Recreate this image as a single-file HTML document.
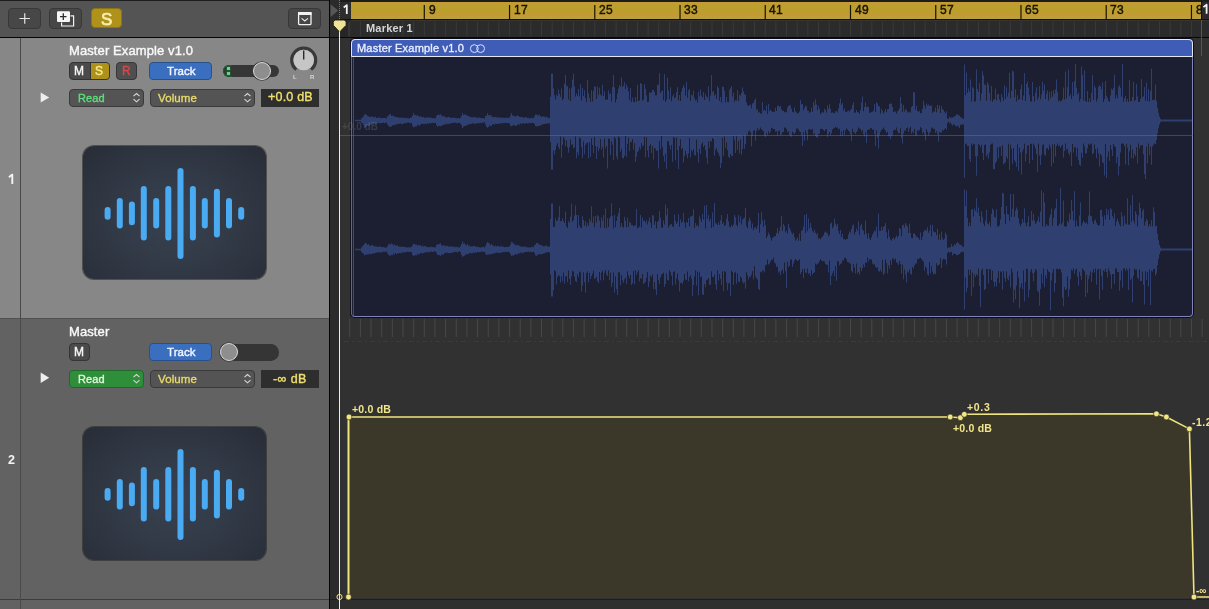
<!DOCTYPE html>
<html><head><meta charset="utf-8">
<style>
*{margin:0;padding:0;box-sizing:border-box}
html,body{width:1209px;height:609px;overflow:hidden;background:#2f2f2f;font-family:"Liberation Sans",sans-serif;position:relative}
.a{position:absolute}
.t{position:absolute;white-space:nowrap;line-height:1;will-change:transform}
svg{position:absolute;left:0;top:0}
</style></head><body>
<div class="a" style="left:0px;top:0px;width:329px;height:38px;background:#545454;border-top:1px solid #1c1c1c"></div>
<div class="a" style="left:0px;top:37px;width:329px;height:1px;background:#060606;"></div>
<div class="a" style="left:0px;top:38px;width:329px;height:280px;background:#878787;"></div>
<div class="a" style="left:0px;top:318px;width:329px;height:1px;background:#505050;"></div>
<div class="a" style="left:0px;top:319px;width:329px;height:280px;background:#626262;"></div>
<div class="a" style="left:0px;top:599px;width:329px;height:1px;background:#3c3c3c;"></div>
<div class="a" style="left:0px;top:600px;width:329px;height:9px;background:#626262;"></div>
<div class="a" style="left:20px;top:38px;width:1px;height:571px;background:#4a4a4a;"></div>
<div class="a" style="left:8px;top:8px;width:33px;height:21px;background:#474747;border:1px solid #383838;border-radius:4px;"></div>
<div class="a" style="left:49px;top:8px;width:33px;height:21px;background:#474747;border:1px solid #383838;border-radius:4px;"></div>
<div class="a" style="left:91px;top:8px;width:31px;height:20px;background:#b0921a;border:1px solid #8c7514;border-radius:4px;"></div>
<div class="a" style="left:288px;top:8px;width:33px;height:21px;background:#474747;border:1px solid #383838;border-radius:4px;"></div>
<svg width="329" height="38">
<path d="M19.5 18.5H30M24.75 13.2V23.8" stroke="#e6e6e6" stroke-width="1.2"/>
<path d="M61.6 22.5V26H73.6V15.8H70.5" fill="none" stroke="#f2f2f2" stroke-width="1.2"/>
<rect x="57" y="11.2" width="13" height="10.8" rx="1" fill="#f6f6f6"/>
<path d="M60 16.6H66.5M63.3 13.3V19.9" stroke="#2a2a2a" stroke-width="1.3"/>
<rect x="298.6" y="12.6" width="12.4" height="12" rx="0.8" fill="none" stroke="#f2f2f2" stroke-width="1.3"/>
<rect x="298" y="12" width="13.6" height="3" fill="#f2f2f2"/>
<path d="M301.6 18.4L304.8 21L308 18.4" fill="none" stroke="#f0f0f0" stroke-width="1.1"/>
</svg>
<div class="t" style="left:100.6px;top:11.21px;font-size:17px;color:#f8efb0;font-weight:normal;-webkit-text-stroke:0.65px #f8efb0">S</div>
<svg width="30" height="200"><path d="M12.3 184V174.6L8.9 177.2" fill="none" stroke="#f4f4f4" stroke-width="1.9" stroke-linejoin="round"/></svg>
<div class="t" style="left:8px;top:454.42px;font-size:12.5px;color:#f4f4f4;font-weight:bold;">2</div>
<div class="t" style="left:69px;top:44.20px;font-size:13px;color:#f8f8f8;font-weight:normal;letter-spacing:0.1px;-webkit-text-stroke:0.40px #f8f8f8">Master Example v1.0</div>
<div class="a" style="left:69px;top:62px;width:41px;height:18px;border-radius:4px;overflow:hidden;border:1px solid #333;background:#4a4a4a"><div class="a" style="left:20px;top:0;width:20px;height:16px;background:#ad9118;border-left:1px solid #333"></div></div>
<div class="t" style="left:74.3px;top:65.24px;font-size:12px;color:#f6f6f6;font-weight:normal;-webkit-text-stroke:0.40px #f6f6f6">M</div>
<div class="t" style="left:95.3px;top:65.24px;font-size:12px;color:#f6ea90;font-weight:normal;-webkit-text-stroke:0.40px #f6ea90">S</div>
<div class="a" style="left:116px;top:62px;width:21px;height:18px;background:#4f4f4f;border:1px solid #363636;border-radius:4px;"></div>
<div class="t" style="left:121.8px;top:65.24px;font-size:12px;color:#d84848;font-weight:normal;-webkit-text-stroke:0.35px #d84848">R</div>
<div class="a" style="left:223px;top:65px;width:56px;height:12px;border-radius:6px;background:#363636"></div>
<div class="a" style="left:223px;top:65px;width:9px;height:12px;border-radius:6px 0 0 6px;border:1px solid #1f5a2c;border-right:none"></div>
<div class="a" style="left:227px;top:67px;width:3px;height:3px;background:#6ad28e;box-shadow:0 0 0 0.6px #1d6a34"></div>
<div class="a" style="left:227px;top:72px;width:3px;height:3px;background:#6ad28e;box-shadow:0 0 0 0.6px #1d6a34"></div>
<div class="a" style="left:252.6px;top:61.5px;width:18.4px;height:18.4px;border-radius:50%;background:#8e8e8e;border:1.4px solid #dadada;box-shadow:0 0 0 0.8px #3a3a3a"></div>
<svg width="329" height="90" style="top:0px">
<path d="M296.4 69.6A12 12 0 1 1 311 69.6" fill="none" stroke="#383838" stroke-width="3.2"/>
<circle cx="303.7" cy="60" r="10.3" fill="#c6c6c6"/>
<path d="M303.7 50.6V59.6" stroke="#2a2a2a" stroke-width="1.4"/>
</svg>
<div class="t" style="left:292.6px;top:74.42px;font-size:6px;color:#d6d6d6;font-weight:bold;">L</div>
<div class="t" style="left:310.4px;top:74.42px;font-size:6px;color:#d6d6d6;font-weight:bold;">R</div>
<div class="a" style="left:149px;top:62px;width:63px;height:17.6px;background:#3a6fbf;border:1px solid #28508c;border-radius:4px;"></div>
<div class="t" style="left:166.8px;top:65.67px;font-size:11.5px;color:#f0f4ff;font-weight:normal;letter-spacing:0.05px;-webkit-text-stroke:0.40px #f0f4ff">Track</div>
<svg width="60" height="20" style="top:89px"><path d="M40.7 3.5L49.2 8.5L40.7 13.6Z" fill="#eeeeee"/></svg>
<div class="a" style="left:69px;top:89px;width:75px;height:17.5px;background:#545454;border:1px solid #3a3a3a;border-radius:4px;"></div>
<div class="t" style="left:77.6px;top:93.19px;font-size:11px;color:#5ee07c;font-weight:normal;letter-spacing:0.1px;-webkit-text-stroke:0.35px #5ee07c">Read</div>
<div class="a" style="left:150px;top:89px;width:105px;height:17.5px;background:#545454;border:1px solid #3a3a3a;border-radius:4px;"></div>
<div class="t" style="left:158.4px;top:92.77px;font-size:11.5px;color:#e8da6a;font-weight:normal;letter-spacing:0.1px;-webkit-text-stroke:0.35px #e8da6a">Volume</div>
<svg width="329" height="20" style="top:89px"><path d="M133.5 7.2L136.5 4.6L139.5 7.2M133.5 10.2L136.5 12.8L139.5 10.2" fill="none" stroke="#d8d8d8" stroke-width="1.1"/></svg>
<svg width="329" height="20" style="top:89px"><path d="M244.5 7.2L247.5 4.6L250.5 7.2M244.5 10.2L247.5 12.8L250.5 10.2" fill="none" stroke="#d8d8d8" stroke-width="1.1"/></svg>
<div class="a" style="left:261px;top:89px;width:58px;height:18px;background:#2e2e2e;"></div>
<div class="t" style="left:267.5px;top:91.22px;font-size:12.5px;color:#f0e070;font-weight:normal;letter-spacing:0.2px;-webkit-text-stroke:0.35px #f0e070">+0.0 dB</div>
<div class="t" style="left:69px;top:325.20px;font-size:13px;color:#f8f8f8;font-weight:normal;letter-spacing:0.1px;-webkit-text-stroke:0.40px #f8f8f8">Master</div>
<div class="a" style="left:69px;top:343px;width:21px;height:18px;background:#4a4a4a;border:1px solid #353535;border-radius:4px;"></div>
<div class="t" style="left:74.3px;top:346.44px;font-size:12px;color:#f6f6f6;font-weight:normal;-webkit-text-stroke:0.40px #f6f6f6">M</div>
<div class="a" style="left:220px;top:344px;width:59px;height:16.5px;border-radius:8.25px;background:#353535"></div>
<div class="a" style="left:219.6px;top:342.8px;width:18.4px;height:18.4px;border-radius:50%;background:#8e8e8e;border:1.4px solid #dadada;box-shadow:0 0 0 0.8px #3a3a3a"></div>
<div class="a" style="left:149px;top:343.3px;width:63px;height:17.6px;background:#3a6fbf;border:1px solid #28508c;border-radius:4px;"></div>
<div class="t" style="left:166.8px;top:346.97px;font-size:11.5px;color:#f0f4ff;font-weight:normal;letter-spacing:0.05px;-webkit-text-stroke:0.40px #f0f4ff">Track</div>
<svg width="60" height="20" style="top:370px"><path d="M40.7 2.5L49.2 7.8L40.7 13Z" fill="#eeeeee"/></svg>
<div class="a" style="left:69px;top:370px;width:75px;height:17.5px;background:#2e8e3a;border:1px solid #1f6a2a;border-radius:4px;"></div>
<div class="t" style="left:77.6px;top:374.19px;font-size:11px;color:#e2f6dc;font-weight:normal;letter-spacing:0.1px;-webkit-text-stroke:0.35px #e2f6dc">Read</div>
<div class="a" style="left:150px;top:370px;width:105px;height:17.5px;background:#545454;border:1px solid #3a3a3a;border-radius:4px;"></div>
<div class="t" style="left:158.4px;top:373.77px;font-size:11.5px;color:#e8da6a;font-weight:normal;letter-spacing:0.1px;-webkit-text-stroke:0.35px #e8da6a">Volume</div>
<svg width="329" height="20" style="top:370px"><path d="M133.5 7.2L136.5 4.6L139.5 7.2M133.5 10.2L136.5 12.8L139.5 10.2" fill="none" stroke="#d8d8d8" stroke-width="1.1"/></svg>
<svg width="329" height="20" style="top:370px"><path d="M244.5 7.2L247.5 4.6L250.5 7.2M244.5 10.2L247.5 12.8L250.5 10.2" fill="none" stroke="#d8d8d8" stroke-width="1.1"/></svg>
<div class="a" style="left:261px;top:370px;width:58px;height:18px;background:#2e2e2e;"></div>
<div class="t" style="left:272.5px;top:372.62px;font-size:12.5px;color:#f0e070;font-weight:normal;letter-spacing:0.4px;-webkit-text-stroke:0.35px #f0e070">-∞ dB</div>
<div class="a" style="left:83px;top:146px;width:183px;height:133px;border-radius:11px;background:radial-gradient(ellipse at 50% 55%,#384150 0%,#333b48 40%,#2c323d 80%,#272c36 100%);box-shadow:0 0 0 1px rgba(35,35,35,0.55)"></div>
<svg width="329" height="300" style="top:0px"><rect x="104.6" y="207.1" width="6" height="12.7" rx="3" fill="#4aaaf2"/><rect x="116.8" y="197.9" width="6" height="30.7" rx="3" fill="#4aaaf2"/><rect x="128.9" y="201.4" width="6" height="23.8" rx="3" fill="#4aaaf2"/><rect x="140.8" y="186.0" width="6" height="54.5" rx="3" fill="#4aaaf2"/><rect x="153.2" y="197.9" width="6" height="30.7" rx="3" fill="#4aaaf2"/><rect x="165.3" y="186.0" width="6" height="54.5" rx="3" fill="#4aaaf2"/><rect x="177.5" y="167.9" width="6" height="91.1" rx="3" fill="#4aaaf2"/><rect x="189.9" y="186.0" width="6" height="54.5" rx="3" fill="#4aaaf2"/><rect x="201.8" y="197.9" width="6" height="30.7" rx="3" fill="#4aaaf2"/><rect x="213.9" y="188.8" width="6" height="48.8" rx="3" fill="#4aaaf2"/><rect x="226.0" y="197.9" width="6" height="30.7" rx="3" fill="#4aaaf2"/><rect x="238.2" y="207.1" width="6" height="12.7" rx="3" fill="#4aaaf2"/></svg>
<div class="a" style="left:83px;top:427px;width:183px;height:133px;border-radius:11px;background:radial-gradient(ellipse at 50% 55%,#384150 0%,#333b48 40%,#2c323d 80%,#272c36 100%);box-shadow:0 0 0 1px rgba(35,35,35,0.55)"></div>
<svg width="329" height="300" style="top:281px"><rect x="104.6" y="207.1" width="6" height="12.7" rx="3" fill="#4aaaf2"/><rect x="116.8" y="197.9" width="6" height="30.7" rx="3" fill="#4aaaf2"/><rect x="128.9" y="201.4" width="6" height="23.8" rx="3" fill="#4aaaf2"/><rect x="140.8" y="186.0" width="6" height="54.5" rx="3" fill="#4aaaf2"/><rect x="153.2" y="197.9" width="6" height="30.7" rx="3" fill="#4aaaf2"/><rect x="165.3" y="186.0" width="6" height="54.5" rx="3" fill="#4aaaf2"/><rect x="177.5" y="167.9" width="6" height="91.1" rx="3" fill="#4aaaf2"/><rect x="189.9" y="186.0" width="6" height="54.5" rx="3" fill="#4aaaf2"/><rect x="201.8" y="197.9" width="6" height="30.7" rx="3" fill="#4aaaf2"/><rect x="213.9" y="188.8" width="6" height="48.8" rx="3" fill="#4aaaf2"/><rect x="226.0" y="197.9" width="6" height="30.7" rx="3" fill="#4aaaf2"/><rect x="238.2" y="207.1" width="6" height="12.7" rx="3" fill="#4aaaf2"/></svg>
<div class="a" style="left:329px;top:0px;width:1px;height:609px;background:#050505;"></div>
<div class="a" style="left:330px;top:0px;width:10px;height:609px;background:#2b2b2b;"></div>
<div class="a" style="left:340px;top:0px;width:869px;height:2px;background:#1c1c1c;"></div>
<div class="a" style="left:340px;top:2px;width:869px;height:17px;background:#2d2d2d;"></div>
<div class="a" style="left:351px;top:2px;width:850px;height:17px;background:linear-gradient(#c49b36,#b9a02b 45%,#c39a34 75%,#b8a040);"></div>
<div class="a" style="left:340px;top:19px;width:869px;height:1px;background:#111;"></div>
<div class="a" style="left:340px;top:20px;width:869px;height:17px;background:#262626;"></div>
<div class="a" style="left:348px;top:20px;width:861px;height:17px;background:#2c2b2b;border-radius:5px 0 0 0;border-top:1px solid #363434;border-left:1px solid #363434"></div>
<div class="a" style="left:330px;top:37px;width:879px;height:1px;background:#080808;"></div>
<div class="a" style="left:340px;top:38px;width:869px;height:561px;background:#313131;"></div>
<div class="a" style="left:330px;top:599px;width:879px;height:1px;background:#1e1e1e;"></div>
<div class="a" style="left:340px;top:600px;width:869px;height:9px;background:#2f2f2f;"></div>
<svg width="360" height="40"><path d="M330.5 4.2L338.2 10.6L330.5 17Z" fill="#575757"/><path d="M339.5 0V19" stroke="#777" stroke-width="1" stroke-dasharray="1 1"/></svg>
<svg width="360" height="30"><path d="M346.8 14V5.1L343.7 7.5" fill="none" stroke="#f2f2f2" stroke-width="1.8" stroke-linejoin="round"/></svg>
<svg width="1209" height="40"><rect x="423.70" y="5" width="1.2" height="14" fill="#1a1400"/><rect x="508.94" y="5" width="1.2" height="14" fill="#1a1400"/><rect x="594.18" y="5" width="1.2" height="14" fill="#1a1400"/><rect x="679.42" y="5" width="1.2" height="14" fill="#1a1400"/><rect x="764.66" y="5" width="1.2" height="14" fill="#1a1400"/><rect x="849.90" y="5" width="1.2" height="14" fill="#1a1400"/><rect x="935.14" y="5" width="1.2" height="14" fill="#1a1400"/><rect x="1020.38" y="5" width="1.2" height="14" fill="#1a1400"/><rect x="1105.62" y="5" width="1.2" height="14" fill="#1a1400"/><rect x="1190.86" y="5" width="1.2" height="14" fill="#1a1400"/></svg>
<div class="t" style="left:428.5px;top:3.64px;font-size:12px;color:#1a1400;font-weight:normal;letter-spacing:0.4px;-webkit-text-stroke:0.45px #1a1400">9</div>
<div class="t" style="left:513.74px;top:3.64px;font-size:12px;color:#1a1400;font-weight:normal;letter-spacing:0.4px;-webkit-text-stroke:0.45px #1a1400">17</div>
<div class="t" style="left:598.98px;top:3.64px;font-size:12px;color:#1a1400;font-weight:normal;letter-spacing:0.4px;-webkit-text-stroke:0.45px #1a1400">25</div>
<div class="t" style="left:684.22px;top:3.64px;font-size:12px;color:#1a1400;font-weight:normal;letter-spacing:0.4px;-webkit-text-stroke:0.45px #1a1400">33</div>
<div class="t" style="left:769.46px;top:3.64px;font-size:12px;color:#1a1400;font-weight:normal;letter-spacing:0.4px;-webkit-text-stroke:0.45px #1a1400">41</div>
<div class="t" style="left:854.7px;top:3.64px;font-size:12px;color:#1a1400;font-weight:normal;letter-spacing:0.4px;-webkit-text-stroke:0.45px #1a1400">49</div>
<div class="t" style="left:939.94px;top:3.64px;font-size:12px;color:#1a1400;font-weight:normal;letter-spacing:0.4px;-webkit-text-stroke:0.45px #1a1400">57</div>
<div class="t" style="left:1025.18px;top:3.64px;font-size:12px;color:#1a1400;font-weight:normal;letter-spacing:0.4px;-webkit-text-stroke:0.45px #1a1400">65</div>
<div class="t" style="left:1110.42px;top:3.64px;font-size:12px;color:#1a1400;font-weight:normal;letter-spacing:0.4px;-webkit-text-stroke:0.45px #1a1400">73</div>
<div class="t" style="left:1195.66px;top:3.64px;font-size:12px;color:#1a1400;font-weight:normal;letter-spacing:0.4px;-webkit-text-stroke:0.45px #1a1400">81</div>
<svg width="1209" height="40"><rect x="349.21" y="21.5" width="1" height="15" fill="#3a3a3a"/><rect x="359.87" y="21.5" width="1" height="15" fill="#3a3a3a"/><rect x="370.52" y="21.5" width="1" height="15" fill="#3a3a3a"/><rect x="381.18" y="21.5" width="1" height="15" fill="#3a3a3a"/><rect x="391.83" y="21.5" width="1" height="15" fill="#3a3a3a"/><rect x="402.49" y="21.5" width="1" height="15" fill="#3a3a3a"/><rect x="413.14" y="21.5" width="1" height="15" fill="#3a3a3a"/><rect x="423.80" y="21.5" width="1" height="15" fill="#3a3a3a"/><rect x="434.45" y="21.5" width="1" height="15" fill="#3a3a3a"/><rect x="445.11" y="21.5" width="1" height="15" fill="#3a3a3a"/><rect x="455.76" y="21.5" width="1" height="15" fill="#3a3a3a"/><rect x="466.42" y="21.5" width="1" height="15" fill="#3a3a3a"/><rect x="477.07" y="21.5" width="1" height="15" fill="#3a3a3a"/><rect x="487.73" y="21.5" width="1" height="15" fill="#3a3a3a"/><rect x="498.38" y="21.5" width="1" height="15" fill="#3a3a3a"/><rect x="509.04" y="21.5" width="1" height="15" fill="#3a3a3a"/><rect x="519.69" y="21.5" width="1" height="15" fill="#3a3a3a"/><rect x="530.35" y="21.5" width="1" height="15" fill="#3a3a3a"/><rect x="541.00" y="21.5" width="1" height="15" fill="#3a3a3a"/><rect x="551.66" y="21.5" width="1" height="15" fill="#3a3a3a"/><rect x="562.31" y="21.5" width="1" height="15" fill="#3a3a3a"/><rect x="572.97" y="21.5" width="1" height="15" fill="#3a3a3a"/><rect x="583.62" y="21.5" width="1" height="15" fill="#3a3a3a"/><rect x="594.28" y="21.5" width="1" height="15" fill="#3a3a3a"/><rect x="604.93" y="21.5" width="1" height="15" fill="#3a3a3a"/><rect x="615.59" y="21.5" width="1" height="15" fill="#3a3a3a"/><rect x="626.24" y="21.5" width="1" height="15" fill="#3a3a3a"/><rect x="636.90" y="21.5" width="1" height="15" fill="#3a3a3a"/><rect x="647.55" y="21.5" width="1" height="15" fill="#3a3a3a"/><rect x="658.21" y="21.5" width="1" height="15" fill="#3a3a3a"/><rect x="668.86" y="21.5" width="1" height="15" fill="#3a3a3a"/><rect x="679.52" y="21.5" width="1" height="15" fill="#3a3a3a"/><rect x="690.17" y="21.5" width="1" height="15" fill="#3a3a3a"/><rect x="700.83" y="21.5" width="1" height="15" fill="#3a3a3a"/><rect x="711.48" y="21.5" width="1" height="15" fill="#3a3a3a"/><rect x="722.14" y="21.5" width="1" height="15" fill="#3a3a3a"/><rect x="732.79" y="21.5" width="1" height="15" fill="#3a3a3a"/><rect x="743.45" y="21.5" width="1" height="15" fill="#3a3a3a"/><rect x="754.10" y="21.5" width="1" height="15" fill="#3a3a3a"/><rect x="764.76" y="21.5" width="1" height="15" fill="#3a3a3a"/><rect x="775.41" y="21.5" width="1" height="15" fill="#3a3a3a"/><rect x="786.07" y="21.5" width="1" height="15" fill="#3a3a3a"/><rect x="796.72" y="21.5" width="1" height="15" fill="#3a3a3a"/><rect x="807.38" y="21.5" width="1" height="15" fill="#3a3a3a"/><rect x="818.03" y="21.5" width="1" height="15" fill="#3a3a3a"/><rect x="828.69" y="21.5" width="1" height="15" fill="#3a3a3a"/><rect x="839.34" y="21.5" width="1" height="15" fill="#3a3a3a"/><rect x="850.00" y="21.5" width="1" height="15" fill="#3a3a3a"/><rect x="860.65" y="21.5" width="1" height="15" fill="#3a3a3a"/><rect x="871.31" y="21.5" width="1" height="15" fill="#3a3a3a"/><rect x="881.96" y="21.5" width="1" height="15" fill="#3a3a3a"/><rect x="892.62" y="21.5" width="1" height="15" fill="#3a3a3a"/><rect x="903.27" y="21.5" width="1" height="15" fill="#3a3a3a"/><rect x="913.93" y="21.5" width="1" height="15" fill="#3a3a3a"/><rect x="924.58" y="21.5" width="1" height="15" fill="#3a3a3a"/><rect x="935.24" y="21.5" width="1" height="15" fill="#3a3a3a"/><rect x="945.89" y="21.5" width="1" height="15" fill="#3a3a3a"/><rect x="956.55" y="21.5" width="1" height="15" fill="#3a3a3a"/><rect x="967.20" y="21.5" width="1" height="15" fill="#3a3a3a"/><rect x="977.86" y="21.5" width="1" height="15" fill="#3a3a3a"/><rect x="988.51" y="21.5" width="1" height="15" fill="#3a3a3a"/><rect x="999.17" y="21.5" width="1" height="15" fill="#3a3a3a"/><rect x="1009.82" y="21.5" width="1" height="15" fill="#3a3a3a"/><rect x="1020.48" y="21.5" width="1" height="15" fill="#3a3a3a"/><rect x="1031.13" y="21.5" width="1" height="15" fill="#3a3a3a"/><rect x="1041.79" y="21.5" width="1" height="15" fill="#3a3a3a"/><rect x="1052.44" y="21.5" width="1" height="15" fill="#3a3a3a"/><rect x="1063.10" y="21.5" width="1" height="15" fill="#3a3a3a"/><rect x="1073.75" y="21.5" width="1" height="15" fill="#3a3a3a"/><rect x="1084.41" y="21.5" width="1" height="15" fill="#3a3a3a"/><rect x="1095.06" y="21.5" width="1" height="15" fill="#3a3a3a"/><rect x="1105.72" y="21.5" width="1" height="15" fill="#3a3a3a"/><rect x="1116.37" y="21.5" width="1" height="15" fill="#3a3a3a"/><rect x="1127.03" y="21.5" width="1" height="15" fill="#3a3a3a"/><rect x="1137.68" y="21.5" width="1" height="15" fill="#3a3a3a"/><rect x="1148.34" y="21.5" width="1" height="15" fill="#3a3a3a"/><rect x="1158.99" y="21.5" width="1" height="15" fill="#3a3a3a"/><rect x="1169.65" y="21.5" width="1" height="15" fill="#3a3a3a"/><rect x="1180.30" y="21.5" width="1" height="15" fill="#3a3a3a"/><rect x="1190.96" y="21.5" width="1" height="15" fill="#3a3a3a"/></svg>
<div class="a" style="left:1201px;top:0px;width:8px;height:19px;background:#2b2b2b;border-top:2px solid #1c1c1c;border-left:1px solid #111"></div>
<svg width="1209" height="30"><path d="M1206.6 13.8V4.7L1203.4 7.1" fill="none" stroke="#f2f2f2" stroke-width="1.8" stroke-linejoin="round"/></svg>
<div class="t" style="left:365.5px;top:22.69px;font-size:11px;color:#d6d6d6;font-weight:bold;letter-spacing:0.2px">Marker 1</div>
<div class="a" style="left:1201px;top:20px;width:1px;height:36px;background:#555;"></div>
<div class="a" style="left:351px;top:39px;width:842px;height:278px;background:#1b1f31;border:1px solid #8084bc;border-left-color:#5a64aa;border-radius:4px;box-shadow:0 0 0 1px #0b0c18"></div>
<div class="a" style="left:351px;top:39px;width:842px;height:18px;background:#3f5db6;border:1px solid #e6e6ee;border-radius:4px 4px 0 0"></div>
<div class="t" style="left:356.5px;top:42.89px;font-size:11px;color:#eaeeff;font-weight:normal;letter-spacing:0.2px;-webkit-text-stroke:0.35px #eaeeff">Master Example v1.0</div>
<svg width="1209" height="609"><circle cx="474.3" cy="48.6" r="3.9" fill="none" stroke="#dce2ff" stroke-width="1"/><circle cx="480.6" cy="48.6" r="3.9" fill="none" stroke="#dce2ff" stroke-width="1"/><rect x="353" y="57" width="1" height="259" fill="#454a60"/><rect x="350" y="40" width="1" height="276" fill="#111320"/><path d="M355 119.7h1V121.3h-1ZM356 119.7h1V121.3h-1ZM357 119.7h1V121.3h-1ZM358 119.7h1V121.3h-1ZM359 119.7h1V121.3h-1ZM360 119.7h1V121.3h-1ZM361 118.2h1V123.0h-1ZM362 117.4h1V123.1h-1ZM363 116.6h1V125.1h-1ZM364 114.4h1V127.9h-1ZM365 113.9h1V126.9h-1ZM366 114.7h1V126.5h-1ZM367 116.0h1V125.6h-1ZM368 116.3h1V126.1h-1ZM369 116.7h1V125.6h-1ZM370 117.0h1V125.0h-1ZM371 116.8h1V124.3h-1ZM372 116.3h1V123.6h-1ZM373 117.6h1V124.6h-1ZM374 117.1h1V123.3h-1ZM375 116.7h1V124.2h-1ZM376 117.9h1V123.5h-1ZM377 118.0h1V123.2h-1ZM378 117.5h1V123.0h-1ZM379 117.6h1V122.8h-1ZM380 118.2h1V123.5h-1ZM381 118.0h1V123.0h-1ZM382 117.9h1V123.0h-1ZM383 118.1h1V122.5h-1ZM384 117.9h1V123.3h-1ZM385 117.7h1V123.0h-1ZM386 118.6h1V122.4h-1ZM387 116.3h1V124.6h-1ZM388 115.6h1V125.7h-1ZM389 114.5h1V126.9h-1ZM390 113.9h1V126.4h-1ZM391 116.0h1V126.6h-1ZM392 115.6h1V125.6h-1ZM393 116.3h1V125.0h-1ZM394 116.3h1V125.3h-1ZM395 117.0h1V124.7h-1ZM396 117.1h1V124.6h-1ZM397 117.5h1V123.8h-1ZM398 117.3h1V124.1h-1ZM399 117.8h1V123.7h-1ZM400 117.7h1V123.4h-1ZM401 117.5h1V124.0h-1ZM402 117.6h1V123.9h-1ZM403 118.1h1V123.7h-1ZM404 117.9h1V122.9h-1ZM405 117.6h1V123.5h-1ZM406 118.4h1V122.8h-1ZM407 117.8h1V122.8h-1ZM408 118.3h1V122.5h-1ZM409 118.5h1V123.0h-1ZM410 117.7h1V123.3h-1ZM411 117.5h1V122.9h-1ZM412 116.0h1V125.8h-1ZM413 113.0h1V127.5h-1ZM414 115.0h1V126.7h-1ZM415 114.9h1V126.4h-1ZM416 115.8h1V126.6h-1ZM417 114.9h1V124.7h-1ZM418 116.3h1V125.6h-1ZM419 116.6h1V125.4h-1ZM420 116.5h1V124.8h-1ZM421 116.5h1V123.8h-1ZM422 117.3h1V123.7h-1ZM423 116.9h1V124.1h-1ZM424 117.7h1V124.2h-1ZM425 117.5h1V123.3h-1ZM426 117.6h1V124.0h-1ZM427 117.6h1V123.5h-1ZM428 117.3h1V123.7h-1ZM429 117.6h1V123.1h-1ZM430 117.8h1V123.5h-1ZM431 117.7h1V123.1h-1ZM432 118.2h1V122.8h-1ZM433 117.9h1V123.0h-1ZM434 118.6h1V123.1h-1ZM435 118.2h1V122.8h-1ZM436 116.0h1V125.0h-1ZM437 114.7h1V126.9h-1ZM438 114.4h1V125.9h-1ZM439 115.0h1V126.0h-1ZM440 114.2h1V126.3h-1ZM441 115.4h1V125.8h-1ZM442 116.5h1V125.2h-1ZM443 115.8h1V124.7h-1ZM444 116.8h1V124.4h-1ZM445 116.9h1V124.6h-1ZM446 117.4h1V123.6h-1ZM447 117.3h1V124.2h-1ZM448 116.9h1V124.0h-1ZM449 116.9h1V123.5h-1ZM450 118.0h1V123.5h-1ZM451 117.7h1V123.0h-1ZM452 117.5h1V123.1h-1ZM453 118.1h1V123.0h-1ZM454 117.4h1V122.6h-1ZM455 118.1h1V122.8h-1ZM456 118.3h1V122.9h-1ZM457 118.3h1V123.3h-1ZM458 118.1h1V123.1h-1ZM459 118.5h1V122.8h-1ZM460 117.4h1V123.8h-1ZM461 116.1h1V125.2h-1ZM462 112.9h1V128.0h-1ZM463 115.0h1V126.7h-1ZM464 114.3h1V125.9h-1ZM465 114.9h1V126.0h-1ZM466 114.8h1V125.4h-1ZM467 115.7h1V124.8h-1ZM468 115.9h1V124.4h-1ZM469 116.5h1V124.3h-1ZM470 117.0h1V123.7h-1ZM471 117.3h1V124.1h-1ZM472 117.5h1V123.3h-1ZM473 116.9h1V123.4h-1ZM474 116.9h1V123.7h-1ZM475 117.7h1V123.9h-1ZM476 117.2h1V123.1h-1ZM477 118.1h1V123.4h-1ZM478 117.5h1V123.3h-1ZM479 117.6h1V123.0h-1ZM480 117.9h1V122.8h-1ZM481 118.1h1V122.9h-1ZM482 118.2h1V122.8h-1ZM483 117.9h1V122.6h-1ZM484 118.7h1V122.3h-1ZM485 115.9h1V124.4h-1ZM486 115.7h1V127.0h-1ZM487 113.2h1V127.7h-1ZM488 114.9h1V126.9h-1ZM489 115.5h1V125.2h-1ZM490 114.8h1V126.2h-1ZM491 116.3h1V125.8h-1ZM492 116.9h1V124.5h-1ZM493 117.2h1V124.1h-1ZM494 117.1h1V124.7h-1ZM495 117.1h1V123.7h-1ZM496 117.5h1V123.7h-1ZM497 116.8h1V123.9h-1ZM498 117.8h1V123.9h-1ZM499 117.5h1V123.4h-1ZM500 117.6h1V123.6h-1ZM501 117.4h1V123.3h-1ZM502 117.7h1V123.2h-1ZM503 117.7h1V123.0h-1ZM504 118.0h1V123.1h-1ZM505 117.8h1V122.8h-1ZM506 117.7h1V122.9h-1ZM507 117.8h1V123.1h-1ZM508 117.7h1V123.0h-1ZM509 117.6h1V123.4h-1ZM510 115.5h1V125.8h-1ZM511 113.0h1V126.2h-1ZM512 115.4h1V125.7h-1ZM513 115.7h1V125.2h-1ZM514 116.3h1V125.2h-1ZM515 116.4h1V125.7h-1ZM516 115.8h1V125.8h-1ZM517 115.5h1V125.1h-1ZM518 115.9h1V123.8h-1ZM519 117.1h1V124.8h-1ZM520 117.0h1V123.6h-1ZM521 116.8h1V123.8h-1ZM522 117.2h1V123.5h-1ZM523 117.7h1V123.1h-1ZM524 117.4h1V124.0h-1ZM525 117.1h1V123.6h-1ZM526 117.3h1V123.1h-1ZM527 118.0h1V123.6h-1ZM528 117.8h1V123.3h-1ZM529 118.4h1V122.8h-1ZM530 118.1h1V123.2h-1ZM531 117.8h1V123.1h-1ZM532 118.3h1V122.8h-1ZM533 118.2h1V122.9h-1ZM534 116.6h1V123.9h-1ZM535 114.5h1V126.3h-1ZM536 114.5h1V126.2h-1ZM537 114.9h1V126.6h-1ZM538 115.8h1V126.0h-1ZM539 114.6h1V126.0h-1ZM540 116.3h1V125.0h-1ZM541 116.8h1V125.3h-1ZM542 116.2h1V124.1h-1ZM543 116.6h1V124.5h-1ZM544 116.8h1V124.0h-1ZM545 117.3h1V123.8h-1ZM546 116.6h1V123.6h-1ZM547 117.4h1V123.6h-1ZM548 117.9h1V123.4h-1ZM549 117.9h1V123.2h-1ZM550 96.8h1V141.9h-1ZM551 73.5h1V169.5h-1ZM552 73.5h1V169.5h-1ZM553 88.2h1V150.6h-1ZM554 95.2h1V154.6h-1ZM555 99.5h1V149.7h-1ZM556 94.5h1V145.5h-1ZM557 96.1h1V143.3h-1ZM558 89.4h1V147.1h-1ZM559 94.1h1V149.2h-1ZM560 96.7h1V136.4h-1ZM561 88.6h1V157.7h-1ZM562 100.2h1V144.7h-1ZM563 98.4h1V136.9h-1ZM564 83.8h1V139.0h-1ZM565 75.1h1V146.3h-1ZM566 85.8h1V140.4h-1ZM567 86.3h1V147.2h-1ZM568 99.6h1V152.8h-1ZM569 88.6h1V147.3h-1ZM570 100.9h1V139.5h-1ZM571 87.7h1V145.0h-1ZM572 79.7h1V144.2h-1ZM573 73.7h1V147.9h-1ZM574 86.5h1V147.5h-1ZM575 96.4h1V136.4h-1ZM576 93.6h1V158.3h-1ZM577 95.8h1V152.3h-1ZM578 88.9h1V155.3h-1ZM579 96.6h1V137.4h-1ZM580 84.3h1V138.6h-1ZM581 100.5h1V147.3h-1ZM582 87.9h1V158.0h-1ZM583 95.9h1V141.6h-1ZM584 90.3h1V154.2h-1ZM585 98.0h1V145.0h-1ZM586 102.2h1V143.3h-1ZM587 79.8h1V142.5h-1ZM588 93.4h1V158.2h-1ZM589 97.7h1V142.3h-1ZM590 101.7h1V156.8h-1ZM591 90.2h1V138.2h-1ZM592 101.6h1V144.9h-1ZM593 90.7h1V153.1h-1ZM594 86.2h1V136.9h-1ZM595 86.8h1V146.0h-1ZM596 99.1h1V159.0h-1ZM597 86.5h1V146.8h-1ZM598 94.7h1V151.3h-1ZM599 87.5h1V148.6h-1ZM600 94.6h1V138.9h-1ZM601 95.7h1V149.4h-1ZM602 84.7h1V146.9h-1ZM603 96.1h1V157.6h-1ZM604 91.3h1V138.7h-1ZM605 100.0h1V148.5h-1ZM606 98.9h1V146.1h-1ZM607 100.1h1V168.6h-1ZM608 90.5h1V138.8h-1ZM609 94.2h1V138.7h-1ZM610 93.2h1V155.1h-1ZM611 101.4h1V141.4h-1ZM612 86.9h1V144.8h-1ZM613 75.1h1V159.9h-1ZM614 87.2h1V137.1h-1ZM615 102.4h1V138.6h-1ZM616 99.3h1V156.6h-1ZM617 93.4h1V159.6h-1ZM618 88.5h1V136.4h-1ZM619 85.3h1V137.4h-1ZM620 86.7h1V151.7h-1ZM621 77.5h1V148.7h-1ZM622 86.9h1V158.1h-1ZM623 85.5h1V158.5h-1ZM624 82.3h1V155.7h-1ZM625 89.0h1V136.1h-1ZM626 84.5h1V156.8h-1ZM627 87.2h1V144.0h-1ZM628 91.2h1V137.6h-1ZM629 100.2h1V150.9h-1ZM630 87.9h1V141.9h-1ZM631 101.9h1V142.3h-1ZM632 97.5h1V139.3h-1ZM633 101.6h1V149.4h-1ZM634 102.4h1V143.2h-1ZM635 96.9h1V162.1h-1ZM636 101.7h1V156.7h-1ZM637 84.8h1V152.1h-1ZM638 100.9h1V150.8h-1ZM639 100.4h1V147.3h-1ZM640 82.9h1V149.4h-1ZM641 84.0h1V143.1h-1ZM642 100.5h1V146.4h-1ZM643 99.7h1V145.2h-1ZM644 84.2h1V136.9h-1ZM645 89.0h1V157.3h-1ZM646 95.5h1V137.3h-1ZM647 102.0h1V150.6h-1ZM648 101.7h1V157.6h-1ZM649 92.6h1V146.1h-1ZM650 92.6h1V144.3h-1ZM651 92.5h1V152.9h-1ZM652 90.0h1V146.1h-1ZM653 89.8h1V159.4h-1ZM654 91.9h1V147.9h-1ZM655 95.4h1V148.8h-1ZM656 95.3h1V150.8h-1ZM657 84.8h1V150.8h-1ZM658 84.8h1V168.5h-1ZM659 73.3h1V141.0h-1ZM660 92.9h1V149.5h-1ZM661 91.2h1V136.1h-1ZM662 90.2h1V147.3h-1ZM663 100.3h1V155.9h-1ZM664 74.0h1V161.7h-1ZM665 102.1h1V153.6h-1ZM666 99.8h1V168.8h-1ZM667 77.4h1V141.5h-1ZM668 90.6h1V140.8h-1ZM669 99.3h1V145.5h-1ZM670 87.3h1V149.4h-1ZM671 101.2h1V145.0h-1ZM672 96.4h1V161.7h-1ZM673 94.2h1V137.0h-1ZM674 98.3h1V138.2h-1ZM675 97.2h1V160.2h-1ZM676 91.9h1V137.5h-1ZM677 87.3h1V149.9h-1ZM678 100.3h1V168.9h-1ZM679 95.1h1V146.0h-1ZM680 101.1h1V139.3h-1ZM681 91.8h1V149.2h-1ZM682 88.1h1V148.0h-1ZM683 84.9h1V162.4h-1ZM684 87.5h1V156.3h-1ZM685 95.6h1V150.7h-1ZM686 82.0h1V154.4h-1ZM687 97.7h1V158.2h-1ZM688 90.5h1V153.4h-1ZM689 89.0h1V138.2h-1ZM690 100.9h1V157.5h-1ZM691 94.5h1V149.9h-1ZM692 95.6h1V151.6h-1ZM693 90.7h1V148.9h-1ZM694 98.3h1V155.2h-1ZM695 100.6h1V155.6h-1ZM696 99.5h1V139.8h-1ZM697 102.4h1V152.4h-1ZM698 91.7h1V162.5h-1ZM699 96.4h1V148.8h-1ZM700 89.6h1V154.1h-1ZM701 95.4h1V144.5h-1ZM702 97.3h1V142.2h-1ZM703 92.0h1V147.0h-1ZM704 99.9h1V145.3h-1ZM705 93.9h1V150.0h-1ZM706 96.5h1V157.7h-1ZM707 97.4h1V163.8h-1ZM708 86.5h1V141.5h-1ZM709 101.3h1V147.9h-1ZM710 95.4h1V141.0h-1ZM711 74.9h1V141.6h-1ZM712 92.0h1V137.9h-1ZM713 91.1h1V139.0h-1ZM714 95.4h1V155.7h-1ZM715 94.2h1V149.7h-1ZM716 98.7h1V147.9h-1ZM717 85.9h1V151.8h-1ZM718 87.9h1V153.2h-1ZM719 100.7h1V156.1h-1ZM720 97.0h1V168.0h-1ZM721 102.4h1V163.1h-1ZM722 86.4h1V137.8h-1ZM723 87.0h1V156.0h-1ZM724 90.7h1V136.4h-1ZM725 102.5h1V148.1h-1ZM726 97.0h1V142.3h-1ZM727 102.1h1V150.0h-1ZM728 102.3h1V156.7h-1ZM729 89.8h1V158.0h-1ZM730 88.2h1V153.9h-1ZM731 85.9h1V156.0h-1ZM732 96.6h1V155.9h-1ZM733 92.4h1V136.2h-1ZM734 101.7h1V140.3h-1ZM735 100.1h1V152.9h-1ZM736 100.5h1V136.3h-1ZM737 90.1h1V150.1h-1ZM738 101.1h1V140.9h-1ZM739 94.8h1V153.6h-1ZM740 95.5h1V139.2h-1ZM741 93.0h1V154.8h-1ZM742 87.4h1V149.1h-1ZM743 91.2h1V135.2h-1ZM744 94.3h1V148.8h-1ZM745 95.0h1V144.1h-1ZM746 102.4h1V134.5h-1ZM747 105.3h1V134.9h-1ZM748 105.8h1V131.5h-1ZM749 105.2h1V130.4h-1ZM750 104.6h1V132.3h-1ZM751 108.3h1V146.6h-1ZM752 103.5h1V135.8h-1ZM753 102.7h1V130.9h-1ZM754 100.3h1V130.1h-1ZM755 98.6h1V140.7h-1ZM756 109.7h1V131.3h-1ZM757 109.3h1V128.0h-1ZM758 112.8h1V130.6h-1ZM759 111.8h1V129.5h-1ZM760 113.4h1V127.6h-1ZM761 113.8h1V129.4h-1ZM762 101.9h1V130.1h-1ZM763 110.7h1V131.6h-1ZM764 109.6h1V136.0h-1ZM765 111.0h1V137.3h-1ZM766 105.4h1V132.9h-1ZM767 113.9h1V135.4h-1ZM768 104.0h1V131.6h-1ZM769 111.3h1V133.5h-1ZM770 109.4h1V131.7h-1ZM771 110.9h1V127.7h-1ZM772 112.1h1V128.4h-1ZM773 111.7h1V129.1h-1ZM774 111.8h1V129.1h-1ZM775 107.8h1V131.8h-1ZM776 110.9h1V131.2h-1ZM777 105.8h1V135.7h-1ZM778 105.6h1V131.0h-1ZM779 106.8h1V130.6h-1ZM780 105.9h1V135.0h-1ZM781 109.3h1V134.4h-1ZM782 110.9h1V132.1h-1ZM783 110.4h1V132.0h-1ZM784 112.2h1V127.4h-1ZM785 112.0h1V127.7h-1ZM786 112.2h1V129.1h-1ZM787 107.4h1V132.0h-1ZM788 106.1h1V131.3h-1ZM789 104.9h1V135.0h-1ZM790 105.6h1V136.3h-1ZM791 108.8h1V136.8h-1ZM792 112.1h1V131.7h-1ZM793 112.5h1V132.9h-1ZM794 107.5h1V133.9h-1ZM795 111.3h1V132.2h-1ZM796 112.4h1V128.6h-1ZM797 113.5h1V128.6h-1ZM798 112.9h1V129.5h-1ZM799 111.6h1V131.4h-1ZM800 100.0h1V131.9h-1ZM801 104.3h1V134.9h-1ZM802 104.1h1V145.9h-1ZM803 110.3h1V132.3h-1ZM804 107.9h1V140.7h-1ZM805 105.7h1V130.2h-1ZM806 106.3h1V133.6h-1ZM807 110.4h1V140.3h-1ZM808 110.9h1V129.6h-1ZM809 113.1h1V128.9h-1ZM810 112.0h1V129.5h-1ZM811 107.6h1V130.1h-1ZM812 111.8h1V128.8h-1ZM813 101.7h1V134.6h-1ZM814 105.2h1V133.1h-1ZM815 99.2h1V136.0h-1ZM816 104.6h1V137.1h-1ZM817 110.3h1V137.7h-1ZM818 105.9h1V134.1h-1ZM819 109.0h1V133.4h-1ZM820 114.2h1V129.1h-1ZM821 112.7h1V128.8h-1ZM822 111.7h1V129.1h-1ZM823 112.7h1V130.0h-1ZM824 108.8h1V131.2h-1ZM825 109.8h1V129.5h-1ZM826 112.5h1V129.0h-1ZM827 105.5h1V137.0h-1ZM828 108.5h1V134.0h-1ZM829 104.3h1V132.1h-1ZM830 108.7h1V135.4h-1ZM831 113.0h1V133.0h-1ZM832 112.2h1V129.6h-1ZM833 113.0h1V128.6h-1ZM834 113.3h1V128.0h-1ZM835 111.4h1V127.1h-1ZM836 110.7h1V127.8h-1ZM837 112.4h1V127.6h-1ZM838 108.5h1V129.2h-1ZM839 103.3h1V128.8h-1ZM840 98.5h1V136.2h-1ZM841 104.8h1V131.5h-1ZM842 103.1h1V135.9h-1ZM843 110.6h1V130.2h-1ZM844 108.5h1V134.8h-1ZM845 111.8h1V130.2h-1ZM846 112.0h1V128.6h-1ZM847 111.3h1V129.4h-1ZM848 110.5h1V130.8h-1ZM849 111.4h1V131.8h-1ZM850 109.8h1V134.5h-1ZM851 108.8h1V141.0h-1ZM852 105.1h1V128.7h-1ZM853 102.3h1V132.3h-1ZM854 112.8h1V132.6h-1ZM855 112.5h1V134.1h-1ZM856 109.9h1V132.0h-1ZM857 112.2h1V130.4h-1ZM858 112.2h1V127.5h-1ZM859 113.8h1V128.5h-1ZM860 110.1h1V129.1h-1ZM861 102.4h1V131.5h-1ZM862 96.4h1V130.0h-1ZM863 111.3h1V134.3h-1ZM864 106.9h1V136.6h-1ZM865 102.4h1V132.2h-1ZM866 107.2h1V142.9h-1ZM867 106.5h1V130.0h-1ZM868 107.1h1V129.6h-1ZM869 112.5h1V129.7h-1ZM870 113.1h1V128.0h-1ZM871 112.0h1V128.3h-1ZM872 111.7h1V130.0h-1ZM873 110.5h1V129.2h-1ZM874 104.0h1V134.0h-1ZM875 111.9h1V146.1h-1ZM876 102.3h1V130.5h-1ZM877 103.4h1V137.4h-1ZM878 106.1h1V148.4h-1ZM879 106.5h1V135.3h-1ZM880 113.5h1V131.7h-1ZM881 108.8h1V130.1h-1ZM882 110.6h1V129.0h-1ZM883 113.6h1V127.5h-1ZM884 111.4h1V129.6h-1ZM885 109.1h1V130.4h-1ZM886 112.3h1V133.0h-1ZM887 109.2h1V131.7h-1ZM888 109.1h1V136.5h-1ZM889 104.0h1V136.1h-1ZM890 103.4h1V138.9h-1ZM891 103.7h1V136.2h-1ZM892 107.0h1V135.0h-1ZM893 112.1h1V130.6h-1ZM894 111.5h1V129.8h-1ZM895 111.6h1V130.1h-1ZM896 113.6h1V127.6h-1ZM897 111.3h1V131.0h-1ZM898 110.6h1V133.3h-1ZM899 108.3h1V133.2h-1ZM900 97.1h1V128.3h-1ZM901 103.5h1V137.9h-1ZM902 112.0h1V143.5h-1ZM903 105.0h1V133.8h-1ZM904 111.5h1V130.4h-1ZM905 109.0h1V130.7h-1ZM906 110.1h1V128.1h-1ZM907 112.6h1V127.6h-1ZM908 112.2h1V132.0h-1ZM909 111.5h1V128.5h-1ZM910 112.7h1V126.7h-1ZM911 107.0h1V133.8h-1ZM912 106.0h1V131.6h-1ZM913 92.0h1V132.9h-1ZM914 92.6h1V128.8h-1ZM915 109.4h1V135.5h-1ZM916 106.1h1V135.8h-1ZM917 111.0h1V129.9h-1ZM918 111.7h1V131.2h-1ZM919 110.8h1V129.7h-1ZM920 113.0h1V127.1h-1ZM921 113.3h1V128.2h-1ZM922 108.9h1V133.5h-1ZM923 100.7h1V132.1h-1ZM924 105.2h1V134.7h-1ZM925 108.6h1V140.6h-1ZM926 103.5h1V129.2h-1ZM927 105.5h1V131.8h-1ZM928 104.6h1V135.8h-1ZM929 106.0h1V133.2h-1ZM930 105.7h1V131.8h-1ZM931 105.6h1V127.6h-1ZM932 113.1h1V127.7h-1ZM933 111.6h1V129.1h-1ZM934 111.5h1V128.7h-1ZM935 107.4h1V133.1h-1ZM936 112.3h1V131.2h-1ZM937 104.9h1V134.3h-1ZM938 108.7h1V141.8h-1ZM939 105.3h1V132.1h-1ZM940 112.9h1V132.7h-1ZM941 106.3h1V132.8h-1ZM942 108.9h1V129.8h-1ZM943 109.9h1V130.8h-1ZM944 111.7h1V129.2h-1ZM945 113.4h1V128.1h-1ZM946 111.2h1V129.8h-1ZM947 118.5h1V122.8h-1ZM948 118.9h1V121.7h-1ZM949 116.8h1V123.2h-1ZM950 117.8h1V122.4h-1ZM951 117.6h1V124.3h-1ZM952 117.4h1V125.7h-1ZM953 117.0h1V124.1h-1ZM954 116.4h1V125.1h-1ZM955 115.8h1V125.8h-1ZM956 114.0h1V126.7h-1ZM957 114.8h1V125.7h-1ZM958 115.2h1V126.6h-1ZM959 115.5h1V128.3h-1ZM960 117.1h1V124.7h-1ZM961 117.8h1V125.1h-1ZM962 118.5h1V123.9h-1ZM963 118.8h1V124.5h-1ZM964 64.5h1V177.5h-1ZM965 95.2h1V144.3h-1ZM966 72.5h1V143.5h-1ZM967 93.1h1V145.9h-1ZM968 88.6h1V145.9h-1ZM969 91.7h1V159.0h-1ZM970 79.5h1V162.1h-1ZM971 101.6h1V143.6h-1ZM972 86.9h1V145.5h-1ZM973 88.3h1V143.5h-1ZM974 101.7h1V144.2h-1ZM975 101.3h1V156.3h-1ZM976 69.6h1V175.7h-1ZM977 88.9h1V156.1h-1ZM978 91.8h1V144.1h-1ZM979 82.9h1V145.0h-1ZM980 100.7h1V147.4h-1ZM981 93.5h1V144.8h-1ZM982 71.2h1V153.0h-1ZM983 75.5h1V160.1h-1ZM984 84.7h1V144.9h-1ZM985 84.7h1V144.5h-1ZM986 100.8h1V156.6h-1ZM987 82.2h1V154.3h-1ZM988 84.6h1V158.7h-1ZM989 93.0h1V152.4h-1ZM990 100.4h1V145.1h-1ZM991 85.9h1V143.8h-1ZM992 101.7h1V143.5h-1ZM993 99.5h1V168.9h-1ZM994 99.2h1V169.2h-1ZM995 88.6h1V163.0h-1ZM996 100.3h1V161.3h-1ZM997 94.3h1V147.5h-1ZM998 94.0h1V158.3h-1ZM999 99.6h1V146.8h-1ZM1000 102.0h1V146.7h-1ZM1001 94.0h1V156.1h-1ZM1002 97.3h1V145.2h-1ZM1003 100.8h1V164.5h-1ZM1004 85.4h1V162.9h-1ZM1005 99.0h1V162.2h-1ZM1006 87.4h1V156.4h-1ZM1007 96.4h1V159.1h-1ZM1008 92.6h1V143.7h-1ZM1009 72.7h1V170.1h-1ZM1010 98.3h1V144.8h-1ZM1011 90.9h1V148.7h-1ZM1012 70.8h1V163.8h-1ZM1013 71.5h1V147.9h-1ZM1014 97.3h1V160.2h-1ZM1015 89.2h1V162.3h-1ZM1016 101.5h1V166.7h-1ZM1017 95.2h1V144.3h-1ZM1018 99.9h1V171.0h-1ZM1019 99.0h1V147.8h-1ZM1020 89.3h1V152.5h-1ZM1021 84.4h1V174.5h-1ZM1022 99.9h1V151.4h-1ZM1023 95.6h1V148.9h-1ZM1024 73.2h1V143.7h-1ZM1025 100.9h1V161.4h-1ZM1026 84.0h1V153.8h-1ZM1027 81.6h1V145.7h-1ZM1028 87.7h1V145.3h-1ZM1029 95.1h1V163.6h-1ZM1030 101.2h1V143.9h-1ZM1031 101.6h1V143.8h-1ZM1032 82.0h1V159.9h-1ZM1033 96.0h1V143.5h-1ZM1034 101.4h1V145.5h-1ZM1035 92.8h1V148.5h-1ZM1036 87.3h1V154.0h-1ZM1037 99.6h1V171.8h-1ZM1038 97.3h1V143.8h-1ZM1039 86.1h1V155.5h-1ZM1040 99.3h1V164.9h-1ZM1041 94.5h1V155.1h-1ZM1042 81.8h1V145.3h-1ZM1043 90.6h1V144.2h-1ZM1044 84.2h1V154.5h-1ZM1045 98.9h1V155.8h-1ZM1046 93.8h1V148.6h-1ZM1047 90.5h1V148.1h-1ZM1048 100.6h1V149.9h-1ZM1049 91.7h1V144.4h-1ZM1050 98.3h1V147.4h-1ZM1051 91.2h1V166.3h-1ZM1052 96.8h1V144.4h-1ZM1053 90.0h1V162.9h-1ZM1054 93.8h1V144.2h-1ZM1055 89.5h1V156.4h-1ZM1056 79.5h1V146.0h-1ZM1057 91.8h1V143.6h-1ZM1058 101.6h1V146.1h-1ZM1059 99.9h1V145.3h-1ZM1060 101.6h1V148.0h-1ZM1061 101.1h1V145.9h-1ZM1062 99.1h1V144.8h-1ZM1063 87.4h1V157.6h-1ZM1064 99.7h1V151.1h-1ZM1065 71.4h1V143.6h-1ZM1066 98.3h1V149.7h-1ZM1067 87.0h1V148.8h-1ZM1068 69.5h1V153.0h-1ZM1069 96.3h1V155.3h-1ZM1070 94.3h1V152.1h-1ZM1071 98.9h1V165.9h-1ZM1072 81.9h1V144.1h-1ZM1073 96.1h1V152.5h-1ZM1074 81.0h1V147.0h-1ZM1075 64.1h1V147.5h-1ZM1076 87.8h1V156.4h-1ZM1077 94.6h1V148.0h-1ZM1078 92.8h1V160.2h-1ZM1079 101.6h1V164.8h-1ZM1080 98.9h1V165.8h-1ZM1081 66.4h1V152.7h-1ZM1082 75.1h1V157.7h-1ZM1083 100.4h1V143.6h-1ZM1084 70.2h1V146.4h-1ZM1085 101.1h1V153.6h-1ZM1086 102.0h1V153.3h-1ZM1087 91.0h1V148.4h-1ZM1088 102.0h1V143.7h-1ZM1089 98.6h1V144.9h-1ZM1090 102.0h1V143.8h-1ZM1091 92.9h1V143.6h-1ZM1092 75.1h1V154.3h-1ZM1093 100.1h1V152.9h-1ZM1094 85.4h1V144.6h-1ZM1095 87.8h1V149.3h-1ZM1096 101.8h1V158.3h-1ZM1097 98.7h1V148.2h-1ZM1098 87.1h1V153.6h-1ZM1099 85.3h1V166.6h-1ZM1100 86.2h1V153.9h-1ZM1101 89.2h1V155.5h-1ZM1102 82.5h1V162.2h-1ZM1103 102.0h1V163.2h-1ZM1104 98.9h1V175.6h-1ZM1105 81.0h1V143.9h-1ZM1106 95.7h1V177.9h-1ZM1107 97.8h1V157.1h-1ZM1108 100.8h1V151.3h-1ZM1109 101.9h1V161.0h-1ZM1110 95.6h1V145.0h-1ZM1111 88.6h1V149.6h-1ZM1112 90.1h1V155.9h-1ZM1113 87.7h1V144.0h-1ZM1114 74.7h1V146.0h-1ZM1115 98.6h1V147.0h-1ZM1116 95.0h1V163.2h-1ZM1117 98.3h1V156.9h-1ZM1118 87.1h1V175.6h-1ZM1119 85.3h1V166.2h-1ZM1120 87.7h1V152.6h-1ZM1121 96.8h1V143.8h-1ZM1122 64.1h1V143.6h-1ZM1123 101.7h1V143.8h-1ZM1124 98.3h1V146.1h-1ZM1125 96.0h1V164.6h-1ZM1126 101.8h1V143.7h-1ZM1127 99.1h1V147.8h-1ZM1128 102.0h1V165.3h-1ZM1129 80.1h1V151.3h-1ZM1130 101.3h1V144.7h-1ZM1131 100.8h1V158.2h-1ZM1132 97.1h1V149.6h-1ZM1133 81.9h1V158.5h-1ZM1134 101.3h1V153.7h-1ZM1135 100.1h1V156.2h-1ZM1136 83.9h1V147.2h-1ZM1137 96.5h1V163.5h-1ZM1138 101.7h1V143.5h-1ZM1139 101.9h1V148.5h-1ZM1140 99.1h1V145.6h-1ZM1141 79.0h1V145.5h-1ZM1142 97.2h1V145.0h-1ZM1143 96.3h1V154.2h-1ZM1144 86.9h1V173.9h-1ZM1145 100.8h1V178.9h-1ZM1146 82.4h1V146.7h-1ZM1147 101.0h1V163.4h-1ZM1148 89.1h1V143.5h-1ZM1149 101.6h1V155.2h-1ZM1150 90.7h1V146.4h-1ZM1151 68.7h1V164.7h-1ZM1152 100.0h1V146.5h-1ZM1153 99.9h1V144.8h-1ZM1154 99.6h1V143.6h-1ZM1155 84.4h1V143.9h-1ZM1156 101.0h1V140.0h-1ZM1157 107.7h1V133.3h-1ZM1158 112.8h1V128.2h-1ZM1159 116.5h1V124.5h-1ZM1160 118.8h1V122.2h-1ZM1161 119.5h1V121.5h-1ZM1162 119.5h1V121.5h-1ZM1163 119.5h1V121.5h-1ZM1164 119.5h1V121.5h-1ZM1165 119.5h1V121.5h-1ZM1166 119.5h1V121.5h-1ZM1167 119.5h1V121.5h-1ZM1168 119.5h1V121.5h-1ZM1169 119.5h1V121.5h-1ZM1170 119.5h1V121.5h-1ZM1171 119.5h1V121.5h-1ZM1172 119.5h1V121.5h-1ZM1173 119.5h1V121.5h-1ZM1174 119.5h1V121.5h-1ZM1175 119.5h1V121.5h-1ZM1176 119.5h1V121.5h-1ZM1177 119.5h1V121.5h-1ZM1178 119.5h1V121.5h-1ZM1179 119.5h1V121.5h-1ZM1180 119.5h1V121.5h-1ZM1181 119.5h1V121.5h-1ZM1182 119.5h1V121.5h-1ZM1183 119.5h1V121.5h-1ZM1184 119.5h1V121.5h-1ZM1185 119.5h1V121.5h-1ZM1186 119.5h1V121.5h-1ZM1187 119.5h1V121.5h-1ZM1188 119.5h1V121.5h-1ZM1189 119.5h1V121.5h-1ZM1190 119.5h1V121.5h-1ZM1191 119.5h1V121.5h-1Z" fill="#2e3f70"/><path d="M355 248.7h1V250.3h-1ZM356 248.7h1V250.3h-1ZM357 248.7h1V250.3h-1ZM358 248.7h1V250.3h-1ZM359 248.7h1V250.3h-1ZM360 248.7h1V250.3h-1ZM361 247.4h1V252.0h-1ZM362 246.3h1V252.9h-1ZM363 245.3h1V253.8h-1ZM364 243.7h1V255.5h-1ZM365 242.8h1V254.8h-1ZM366 243.8h1V254.5h-1ZM367 244.7h1V254.6h-1ZM368 244.0h1V254.5h-1ZM369 245.8h1V253.6h-1ZM370 245.8h1V254.3h-1ZM371 245.1h1V253.9h-1ZM372 245.3h1V253.6h-1ZM373 245.4h1V253.4h-1ZM374 246.4h1V253.3h-1ZM375 246.3h1V253.0h-1ZM376 246.4h1V252.5h-1ZM377 246.7h1V252.4h-1ZM378 246.9h1V251.9h-1ZM379 246.4h1V252.6h-1ZM380 246.4h1V252.4h-1ZM381 246.9h1V252.3h-1ZM382 247.3h1V252.2h-1ZM383 247.1h1V251.7h-1ZM384 247.4h1V251.9h-1ZM385 247.4h1V251.8h-1ZM386 247.4h1V251.5h-1ZM387 246.2h1V253.4h-1ZM388 244.3h1V254.7h-1ZM389 243.9h1V255.6h-1ZM390 244.6h1V255.7h-1ZM391 243.2h1V254.7h-1ZM392 244.1h1V255.3h-1ZM393 245.6h1V253.5h-1ZM394 244.6h1V254.4h-1ZM395 245.2h1V253.1h-1ZM396 245.8h1V253.9h-1ZM397 245.3h1V253.6h-1ZM398 246.4h1V253.4h-1ZM399 246.4h1V253.0h-1ZM400 246.8h1V253.2h-1ZM401 246.4h1V252.8h-1ZM402 246.9h1V252.5h-1ZM403 246.6h1V252.4h-1ZM404 246.9h1V252.4h-1ZM405 247.0h1V251.9h-1ZM406 247.3h1V252.2h-1ZM407 247.4h1V251.7h-1ZM408 247.5h1V252.1h-1ZM409 247.1h1V251.9h-1ZM410 247.6h1V251.8h-1ZM411 246.7h1V252.0h-1ZM412 245.6h1V255.2h-1ZM413 243.8h1V255.7h-1ZM414 243.9h1V255.8h-1ZM415 244.8h1V255.1h-1ZM416 244.5h1V255.4h-1ZM417 245.6h1V254.0h-1ZM418 245.0h1V254.8h-1ZM419 245.3h1V253.7h-1ZM420 245.3h1V253.2h-1ZM421 246.4h1V253.2h-1ZM422 245.4h1V253.4h-1ZM423 246.4h1V253.1h-1ZM424 245.9h1V252.4h-1ZM425 246.3h1V252.4h-1ZM426 246.8h1V252.2h-1ZM427 247.0h1V252.2h-1ZM428 247.2h1V252.1h-1ZM429 247.3h1V252.4h-1ZM430 246.8h1V251.6h-1ZM431 246.7h1V251.7h-1ZM432 247.1h1V252.0h-1ZM433 247.2h1V251.7h-1ZM434 247.2h1V251.5h-1ZM435 247.2h1V251.2h-1ZM436 245.1h1V253.0h-1ZM437 244.2h1V255.0h-1ZM438 244.2h1V255.0h-1ZM439 243.9h1V255.2h-1ZM440 243.3h1V255.9h-1ZM441 245.3h1V254.6h-1ZM442 245.5h1V254.7h-1ZM443 245.4h1V254.5h-1ZM444 245.3h1V253.0h-1ZM445 246.4h1V253.0h-1ZM446 245.4h1V252.7h-1ZM447 246.1h1V252.8h-1ZM448 246.4h1V253.2h-1ZM449 246.7h1V252.9h-1ZM450 246.3h1V253.0h-1ZM451 246.6h1V252.9h-1ZM452 246.8h1V252.4h-1ZM453 246.7h1V252.5h-1ZM454 246.5h1V251.7h-1ZM455 247.3h1V252.1h-1ZM456 246.7h1V252.0h-1ZM457 247.2h1V252.4h-1ZM458 247.3h1V251.5h-1ZM459 247.5h1V251.4h-1ZM460 246.3h1V252.0h-1ZM461 244.3h1V255.0h-1ZM462 241.6h1V256.9h-1ZM463 243.6h1V255.9h-1ZM464 243.2h1V255.6h-1ZM465 244.7h1V255.2h-1ZM466 245.4h1V254.0h-1ZM467 244.1h1V254.0h-1ZM468 245.7h1V254.2h-1ZM469 245.6h1V252.7h-1ZM470 246.4h1V252.9h-1ZM471 246.2h1V253.6h-1ZM472 246.5h1V253.3h-1ZM473 245.9h1V252.6h-1ZM474 245.9h1V252.9h-1ZM475 246.6h1V252.2h-1ZM476 246.7h1V252.8h-1ZM477 246.7h1V251.9h-1ZM478 247.0h1V252.1h-1ZM479 247.2h1V252.2h-1ZM480 247.4h1V252.3h-1ZM481 247.3h1V251.6h-1ZM482 247.0h1V251.7h-1ZM483 246.8h1V251.9h-1ZM484 247.4h1V251.8h-1ZM485 246.0h1V253.7h-1ZM486 243.4h1V255.1h-1ZM487 242.0h1V254.7h-1ZM488 242.8h1V254.6h-1ZM489 243.4h1V254.2h-1ZM490 245.3h1V254.5h-1ZM491 244.1h1V253.7h-1ZM492 245.2h1V254.0h-1ZM493 245.8h1V253.6h-1ZM494 246.4h1V253.3h-1ZM495 245.5h1V252.9h-1ZM496 246.4h1V252.4h-1ZM497 246.0h1V252.7h-1ZM498 245.9h1V252.9h-1ZM499 246.9h1V253.0h-1ZM500 246.1h1V252.7h-1ZM501 246.4h1V252.5h-1ZM502 246.6h1V252.4h-1ZM503 246.8h1V251.9h-1ZM504 247.3h1V252.3h-1ZM505 246.9h1V251.6h-1ZM506 246.9h1V252.0h-1ZM507 247.1h1V252.1h-1ZM508 246.8h1V251.7h-1ZM509 246.2h1V252.5h-1ZM510 244.6h1V254.2h-1ZM511 241.7h1V256.0h-1ZM512 242.3h1V255.2h-1ZM513 243.5h1V256.0h-1ZM514 243.9h1V254.5h-1ZM515 245.4h1V254.3h-1ZM516 245.1h1V254.5h-1ZM517 244.8h1V254.5h-1ZM518 245.6h1V253.3h-1ZM519 245.7h1V253.6h-1ZM520 246.5h1V252.7h-1ZM521 246.6h1V252.6h-1ZM522 246.5h1V253.3h-1ZM523 246.8h1V253.1h-1ZM524 246.8h1V252.1h-1ZM525 246.2h1V251.9h-1ZM526 247.2h1V251.9h-1ZM527 247.3h1V252.0h-1ZM528 247.2h1V251.8h-1ZM529 247.4h1V252.2h-1ZM530 247.5h1V251.7h-1ZM531 247.0h1V252.3h-1ZM532 247.0h1V252.1h-1ZM533 247.3h1V251.8h-1ZM534 245.1h1V252.9h-1ZM535 244.7h1V255.5h-1ZM536 243.1h1V255.9h-1ZM537 243.0h1V254.6h-1ZM538 243.7h1V254.8h-1ZM539 244.6h1V254.0h-1ZM540 245.2h1V254.3h-1ZM541 245.1h1V254.5h-1ZM542 245.8h1V253.9h-1ZM543 246.2h1V253.6h-1ZM544 246.3h1V253.6h-1ZM545 245.4h1V252.6h-1ZM546 245.8h1V252.4h-1ZM547 246.6h1V252.2h-1ZM548 246.6h1V252.1h-1ZM549 246.4h1V252.5h-1ZM550 218.9h1V274.6h-1ZM551 203.5h1V296.5h-1ZM552 203.5h1V296.5h-1ZM553 226.9h1V290.2h-1ZM554 226.7h1V270.2h-1ZM555 218.3h1V271.3h-1ZM556 221.1h1V284.5h-1ZM557 220.5h1V277.1h-1ZM558 217.3h1V275.3h-1ZM559 206.0h1V276.1h-1ZM560 221.2h1V282.7h-1ZM561 221.1h1V276.3h-1ZM562 218.3h1V281.2h-1ZM563 221.1h1V272.5h-1ZM564 222.9h1V283.8h-1ZM565 211.6h1V276.6h-1ZM566 226.6h1V276.1h-1ZM567 227.9h1V282.2h-1ZM568 221.0h1V270.4h-1ZM569 222.7h1V279.0h-1ZM570 216.4h1V284.8h-1ZM571 203.5h1V276.4h-1ZM572 221.8h1V270.7h-1ZM573 219.9h1V271.4h-1ZM574 215.5h1V276.7h-1ZM575 205.5h1V281.0h-1ZM576 215.1h1V282.0h-1ZM577 228.3h1V274.0h-1ZM578 215.1h1V277.1h-1ZM579 225.5h1V271.5h-1ZM580 227.8h1V272.3h-1ZM581 227.9h1V291.5h-1ZM582 216.2h1V285.4h-1ZM583 220.1h1V272.3h-1ZM584 225.6h1V281.9h-1ZM585 220.9h1V292.7h-1ZM586 226.5h1V273.3h-1ZM587 222.7h1V271.3h-1ZM588 225.7h1V282.4h-1ZM589 218.7h1V272.9h-1ZM590 221.4h1V278.9h-1ZM591 206.2h1V276.0h-1ZM592 222.8h1V273.7h-1ZM593 216.4h1V270.8h-1ZM594 227.3h1V279.1h-1ZM595 216.0h1V278.3h-1ZM596 222.4h1V276.7h-1ZM597 215.1h1V281.1h-1ZM598 216.2h1V283.1h-1ZM599 220.6h1V272.0h-1ZM600 227.7h1V280.3h-1ZM601 217.4h1V272.6h-1ZM602 220.8h1V270.5h-1ZM603 214.9h1V280.2h-1ZM604 227.7h1V272.8h-1ZM605 208.4h1V270.1h-1ZM606 228.3h1V274.6h-1ZM607 218.4h1V276.1h-1ZM608 227.0h1V270.6h-1ZM609 218.3h1V280.0h-1ZM610 216.5h1V272.7h-1ZM611 203.2h1V287.0h-1ZM612 216.1h1V282.8h-1ZM613 228.4h1V272.5h-1ZM614 215.0h1V292.8h-1ZM615 227.3h1V276.3h-1ZM616 221.1h1V289.1h-1ZM617 216.6h1V295.0h-1ZM618 213.0h1V272.2h-1ZM619 207.9h1V272.5h-1ZM620 227.1h1V284.9h-1ZM621 223.1h1V275.1h-1ZM622 226.4h1V280.3h-1ZM623 227.8h1V282.8h-1ZM624 217.1h1V279.3h-1ZM625 220.8h1V277.5h-1ZM626 227.3h1V283.9h-1ZM627 217.4h1V271.3h-1ZM628 227.1h1V275.6h-1ZM629 221.7h1V278.3h-1ZM630 222.7h1V275.1h-1ZM631 225.0h1V284.9h-1ZM632 224.9h1V283.2h-1ZM633 226.3h1V271.0h-1ZM634 225.7h1V284.3h-1ZM635 224.9h1V270.3h-1ZM636 208.9h1V274.9h-1ZM637 228.3h1V272.3h-1ZM638 227.8h1V270.2h-1ZM639 226.5h1V281.5h-1ZM640 215.0h1V277.9h-1ZM641 227.6h1V279.0h-1ZM642 217.8h1V274.0h-1ZM643 221.0h1V283.9h-1ZM644 220.5h1V283.1h-1ZM645 222.8h1V281.7h-1ZM646 220.5h1V277.7h-1ZM647 224.5h1V272.0h-1ZM648 221.2h1V286.9h-1ZM649 217.5h1V281.5h-1ZM650 223.0h1V275.5h-1ZM651 228.0h1V277.3h-1ZM652 215.1h1V274.6h-1ZM653 215.8h1V289.1h-1ZM654 224.7h1V281.9h-1ZM655 221.2h1V289.5h-1ZM656 228.5h1V295.1h-1ZM657 221.9h1V274.1h-1ZM658 220.8h1V280.3h-1ZM659 211.1h1V284.0h-1ZM660 217.8h1V277.6h-1ZM661 227.3h1V274.8h-1ZM662 228.1h1V273.8h-1ZM663 220.2h1V272.8h-1ZM664 224.4h1V286.7h-1ZM665 204.5h1V284.1h-1ZM666 215.2h1V273.4h-1ZM667 208.3h1V280.1h-1ZM668 227.4h1V280.5h-1ZM669 225.4h1V270.3h-1ZM670 224.4h1V272.3h-1ZM671 224.1h1V275.7h-1ZM672 226.5h1V285.4h-1ZM673 226.8h1V271.9h-1ZM674 214.6h1V271.3h-1ZM675 220.7h1V284.6h-1ZM676 223.9h1V278.5h-1ZM677 221.9h1V273.4h-1ZM678 214.6h1V280.6h-1ZM679 226.7h1V291.4h-1ZM680 219.2h1V283.1h-1ZM681 223.0h1V282.6h-1ZM682 221.6h1V284.0h-1ZM683 212.9h1V280.7h-1ZM684 222.8h1V274.0h-1ZM685 227.9h1V279.5h-1ZM686 221.8h1V279.9h-1ZM687 222.7h1V271.6h-1ZM688 217.9h1V281.3h-1ZM689 226.4h1V276.7h-1ZM690 216.4h1V275.2h-1ZM691 216.3h1V278.7h-1ZM692 215.7h1V296.1h-1ZM693 209.2h1V285.1h-1ZM694 228.0h1V276.5h-1ZM695 223.0h1V270.3h-1ZM696 225.9h1V285.4h-1ZM697 224.7h1V271.5h-1ZM698 226.4h1V295.3h-1ZM699 216.2h1V272.3h-1ZM700 219.2h1V277.3h-1ZM701 222.0h1V276.4h-1ZM702 213.9h1V294.2h-1ZM703 219.4h1V294.9h-1ZM704 205.8h1V283.9h-1ZM705 228.4h1V287.3h-1ZM706 205.0h1V280.1h-1ZM707 219.0h1V279.6h-1ZM708 214.9h1V278.1h-1ZM709 221.3h1V284.8h-1ZM710 219.1h1V284.7h-1ZM711 228.0h1V271.3h-1ZM712 212.6h1V277.0h-1ZM713 226.8h1V277.3h-1ZM714 203.1h1V274.8h-1ZM715 222.7h1V284.3h-1ZM716 223.9h1V289.6h-1ZM717 225.1h1V270.2h-1ZM718 222.2h1V280.6h-1ZM719 225.0h1V273.9h-1ZM720 220.2h1V278.7h-1ZM721 214.9h1V285.0h-1ZM722 224.0h1V271.6h-1ZM723 221.9h1V291.2h-1ZM724 226.0h1V271.0h-1ZM725 225.1h1V271.8h-1ZM726 218.8h1V282.6h-1ZM727 214.1h1V290.6h-1ZM728 221.5h1V283.4h-1ZM729 226.8h1V282.7h-1ZM730 227.2h1V296.3h-1ZM731 225.1h1V270.5h-1ZM732 226.5h1V272.0h-1ZM733 224.4h1V284.7h-1ZM734 214.9h1V273.0h-1ZM735 217.3h1V271.8h-1ZM736 224.8h1V283.7h-1ZM737 226.4h1V273.6h-1ZM738 215.0h1V281.5h-1ZM739 222.3h1V282.1h-1ZM740 216.3h1V276.7h-1ZM741 224.4h1V277.8h-1ZM742 219.6h1V281.7h-1ZM743 218.6h1V283.4h-1ZM744 217.5h1V282.2h-1ZM745 208.1h1V288.7h-1ZM746 226.2h1V272.2h-1ZM747 228.2h1V275.4h-1ZM748 221.6h1V279.5h-1ZM749 217.8h1V276.8h-1ZM750 220.2h1V276.9h-1ZM751 228.2h1V274.7h-1ZM752 223.4h1V271.1h-1ZM753 230.2h1V279.5h-1ZM754 227.6h1V266.3h-1ZM755 227.2h1V276.4h-1ZM756 229.2h1V278.3h-1ZM757 225.8h1V279.5h-1ZM758 212.9h1V289.0h-1ZM759 232.8h1V289.9h-1ZM760 224.3h1V271.8h-1ZM761 212.0h1V272.4h-1ZM762 220.5h1V270.5h-1ZM763 227.0h1V270.5h-1ZM764 219.5h1V272.5h-1ZM765 225.1h1V265.2h-1ZM766 238.1h1V264.8h-1ZM767 235.8h1V259.5h-1ZM768 232.4h1V264.6h-1ZM769 234.8h1V263.7h-1ZM770 237.5h1V261.8h-1ZM771 240.7h1V259.8h-1ZM772 238.1h1V260.0h-1ZM773 236.7h1V257.6h-1ZM774 236.5h1V262.4h-1ZM775 236.1h1V263.5h-1ZM776 233.0h1V267.1h-1ZM777 227.9h1V266.4h-1ZM778 233.5h1V272.7h-1ZM779 230.7h1V271.5h-1ZM780 226.5h1V275.3h-1ZM781 215.7h1V270.9h-1ZM782 230.6h1V269.4h-1ZM783 223.7h1V273.5h-1ZM784 225.9h1V262.5h-1ZM785 232.2h1V271.2h-1ZM786 230.5h1V288.3h-1ZM787 233.5h1V261.8h-1ZM788 224.1h1V267.1h-1ZM789 227.7h1V265.8h-1ZM790 230.1h1V259.6h-1ZM791 232.6h1V259.4h-1ZM792 234.3h1V266.8h-1ZM793 232.8h1V263.5h-1ZM794 237.0h1V260.4h-1ZM795 240.7h1V259.2h-1ZM796 239.3h1V260.0h-1ZM797 237.5h1V261.1h-1ZM798 240.8h1V260.2h-1ZM799 233.5h1V259.3h-1ZM800 241.1h1V274.0h-1ZM801 230.9h1V272.0h-1ZM802 230.1h1V268.9h-1ZM803 226.4h1V277.9h-1ZM804 215.0h1V268.4h-1ZM805 232.9h1V272.6h-1ZM806 213.9h1V273.3h-1ZM807 231.2h1V268.5h-1ZM808 218.5h1V274.1h-1ZM809 228.4h1V272.9h-1ZM810 222.9h1V276.0h-1ZM811 227.8h1V270.3h-1ZM812 231.0h1V274.4h-1ZM813 232.6h1V273.0h-1ZM814 229.8h1V272.3h-1ZM815 232.7h1V263.5h-1ZM816 234.4h1V264.7h-1ZM817 233.1h1V263.7h-1ZM818 239.0h1V263.2h-1ZM819 237.9h1V260.9h-1ZM820 239.6h1V259.2h-1ZM821 237.6h1V260.5h-1ZM822 236.7h1V261.2h-1ZM823 235.3h1V261.0h-1ZM824 232.4h1V261.5h-1ZM825 231.4h1V263.9h-1ZM826 232.7h1V264.9h-1ZM827 233.3h1V264.8h-1ZM828 236.4h1V272.5h-1ZM829 234.9h1V260.6h-1ZM830 223.7h1V285.2h-1ZM831 222.6h1V275.8h-1ZM832 228.3h1V273.3h-1ZM833 226.4h1V270.8h-1ZM834 218.5h1V276.0h-1ZM835 223.6h1V266.0h-1ZM836 225.8h1V280.7h-1ZM837 224.0h1V260.8h-1ZM838 231.1h1V261.5h-1ZM839 234.0h1V265.3h-1ZM840 229.9h1V264.0h-1ZM841 237.1h1V263.2h-1ZM842 233.7h1V260.6h-1ZM843 239.2h1V260.5h-1ZM844 239.1h1V258.3h-1ZM845 240.2h1V257.5h-1ZM846 239.0h1V259.2h-1ZM847 238.7h1V262.1h-1ZM848 234.2h1V262.3h-1ZM849 231.5h1V263.2h-1ZM850 232.4h1V263.7h-1ZM851 229.0h1V271.1h-1ZM852 225.6h1V272.5h-1ZM853 224.6h1V264.1h-1ZM854 234.6h1V267.4h-1ZM855 231.9h1V273.4h-1ZM856 228.4h1V263.6h-1ZM857 231.0h1V273.6h-1ZM858 221.2h1V272.0h-1ZM859 234.7h1V274.7h-1ZM860 225.7h1V267.5h-1ZM861 223.7h1V271.2h-1ZM862 229.4h1V267.9h-1ZM863 230.7h1V264.5h-1ZM864 234.5h1V266.9h-1ZM865 220.6h1V262.5h-1ZM866 233.5h1V263.1h-1ZM867 238.4h1V257.4h-1ZM868 232.9h1V261.5h-1ZM869 238.2h1V259.0h-1ZM870 240.0h1V259.6h-1ZM871 237.2h1V259.4h-1ZM872 234.5h1V263.5h-1ZM873 232.4h1V264.8h-1ZM874 230.6h1V264.3h-1ZM875 231.3h1V266.9h-1ZM876 226.4h1V267.8h-1ZM877 237.5h1V267.5h-1ZM878 213.6h1V271.0h-1ZM879 230.8h1V271.7h-1ZM880 231.0h1V269.8h-1ZM881 226.8h1V272.2h-1ZM882 230.2h1V259.7h-1ZM883 226.8h1V275.0h-1ZM884 225.9h1V273.3h-1ZM885 223.0h1V259.6h-1ZM886 232.3h1V263.1h-1ZM887 238.8h1V273.6h-1ZM888 229.4h1V265.2h-1ZM889 236.8h1V268.5h-1ZM890 239.8h1V260.5h-1ZM891 240.7h1V264.8h-1ZM892 238.8h1V258.5h-1ZM893 237.6h1V258.6h-1ZM894 239.4h1V259.9h-1ZM895 237.4h1V258.5h-1ZM896 235.5h1V262.5h-1ZM897 237.6h1V263.3h-1ZM898 235.9h1V265.1h-1ZM899 228.0h1V260.7h-1ZM900 229.0h1V264.0h-1ZM901 236.2h1V273.6h-1ZM902 225.2h1V264.4h-1ZM903 224.7h1V279.3h-1ZM904 227.6h1V269.5h-1ZM905 222.9h1V274.8h-1ZM906 225.1h1V282.5h-1ZM907 226.6h1V271.5h-1ZM908 233.1h1V272.4h-1ZM909 223.8h1V269.6h-1ZM910 233.1h1V273.7h-1ZM911 238.0h1V274.6h-1ZM912 238.3h1V266.9h-1ZM913 233.5h1V268.5h-1ZM914 233.2h1V265.2h-1ZM915 235.1h1V263.5h-1ZM916 236.7h1V263.4h-1ZM917 236.9h1V259.0h-1ZM918 237.9h1V259.2h-1ZM919 239.8h1V258.3h-1ZM920 232.6h1V257.8h-1ZM921 240.3h1V259.0h-1ZM922 236.7h1V260.7h-1ZM923 231.9h1V261.6h-1ZM924 230.2h1V270.7h-1ZM925 229.8h1V266.5h-1ZM926 230.6h1V267.9h-1ZM927 227.2h1V274.6h-1ZM928 232.7h1V275.4h-1ZM929 230.4h1V262.0h-1ZM930 224.8h1V273.2h-1ZM931 236.3h1V266.3h-1ZM932 224.7h1V271.8h-1ZM933 231.2h1V274.4h-1ZM934 232.6h1V273.6h-1ZM935 232.0h1V274.2h-1ZM936 235.3h1V263.2h-1ZM937 228.7h1V266.0h-1ZM938 239.8h1V265.1h-1ZM939 234.3h1V264.4h-1ZM940 240.0h1V258.0h-1ZM941 231.6h1V268.0h-1ZM942 238.3h1V260.2h-1ZM943 240.0h1V258.7h-1ZM944 238.6h1V259.3h-1ZM945 232.4h1V259.5h-1ZM946 234.8h1V264.4h-1ZM947 248.3h1V252.8h-1ZM948 247.2h1V251.6h-1ZM949 247.7h1V253.0h-1ZM950 247.1h1V251.9h-1ZM951 244.0h1V251.7h-1ZM952 246.7h1V255.4h-1ZM953 246.0h1V253.8h-1ZM954 244.1h1V253.8h-1ZM955 245.0h1V254.1h-1ZM956 243.3h1V255.0h-1ZM957 242.2h1V255.2h-1ZM958 243.0h1V254.7h-1ZM959 244.4h1V254.0h-1ZM960 244.8h1V252.7h-1ZM961 245.3h1V252.2h-1ZM962 246.4h1V251.4h-1ZM963 247.1h1V252.1h-1ZM964 189.5h1V309.5h-1ZM965 206.3h1V277.5h-1ZM966 190.7h1V292.3h-1ZM967 218.0h1V287.8h-1ZM968 226.4h1V269.4h-1ZM969 222.6h1V275.0h-1ZM970 226.1h1V269.8h-1ZM971 209.6h1V295.8h-1ZM972 209.3h1V272.6h-1ZM973 216.5h1V287.3h-1ZM974 208.5h1V274.3h-1ZM975 211.1h1V277.1h-1ZM976 198.3h1V274.2h-1ZM977 212.6h1V275.4h-1ZM978 207.6h1V268.5h-1ZM979 216.1h1V286.0h-1ZM980 222.3h1V307.1h-1ZM981 211.2h1V270.4h-1ZM982 216.7h1V268.5h-1ZM983 223.5h1V274.9h-1ZM984 225.9h1V289.9h-1ZM985 220.5h1V289.1h-1ZM986 209.8h1V269.0h-1ZM987 223.3h1V269.0h-1ZM988 224.3h1V283.4h-1ZM989 221.9h1V269.3h-1ZM990 226.4h1V269.3h-1ZM991 213.9h1V280.0h-1ZM992 208.5h1V270.7h-1ZM993 209.9h1V281.6h-1ZM994 217.0h1V286.7h-1ZM995 217.4h1V281.9h-1ZM996 209.2h1V286.2h-1ZM997 226.5h1V278.1h-1ZM998 226.4h1V271.1h-1ZM999 225.2h1V283.1h-1ZM1000 219.5h1V271.4h-1ZM1001 207.1h1V271.7h-1ZM1002 192.7h1V289.4h-1ZM1003 193.6h1V271.3h-1ZM1004 214.3h1V277.7h-1ZM1005 224.1h1V281.8h-1ZM1006 206.0h1V271.5h-1ZM1007 214.1h1V278.8h-1ZM1008 214.6h1V280.3h-1ZM1009 220.9h1V275.5h-1ZM1010 194.0h1V287.3h-1ZM1011 216.9h1V268.6h-1ZM1012 209.0h1V272.6h-1ZM1013 193.9h1V302.5h-1ZM1014 216.7h1V289.6h-1ZM1015 210.4h1V299.3h-1ZM1016 207.4h1V285.8h-1ZM1017 209.6h1V271.2h-1ZM1018 218.3h1V277.4h-1ZM1019 223.4h1V308.3h-1ZM1020 226.3h1V287.6h-1ZM1021 224.0h1V283.3h-1ZM1022 219.1h1V289.0h-1ZM1023 222.3h1V270.5h-1ZM1024 208.2h1V301.6h-1ZM1025 223.0h1V282.1h-1ZM1026 226.5h1V268.6h-1ZM1027 222.2h1V269.1h-1ZM1028 216.2h1V297.3h-1ZM1029 226.5h1V289.4h-1ZM1030 226.3h1V271.6h-1ZM1031 211.0h1V268.9h-1ZM1032 220.6h1V273.3h-1ZM1033 213.7h1V281.2h-1ZM1034 220.8h1V272.6h-1ZM1035 223.9h1V269.0h-1ZM1036 222.5h1V270.3h-1ZM1037 220.5h1V290.8h-1ZM1038 216.6h1V292.1h-1ZM1039 221.9h1V305.5h-1ZM1040 211.5h1V289.1h-1ZM1041 190.6h1V274.0h-1ZM1042 226.5h1V283.5h-1ZM1043 192.7h1V268.5h-1ZM1044 202.4h1V287.3h-1ZM1045 226.5h1V275.3h-1ZM1046 223.7h1V278.4h-1ZM1047 225.5h1V269.2h-1ZM1048 225.8h1V271.4h-1ZM1049 217.5h1V272.1h-1ZM1050 214.6h1V310.3h-1ZM1051 208.4h1V280.2h-1ZM1052 225.7h1V272.8h-1ZM1053 218.0h1V269.1h-1ZM1054 209.8h1V291.8h-1ZM1055 208.0h1V283.1h-1ZM1056 199.0h1V269.1h-1ZM1057 226.0h1V268.5h-1ZM1058 225.5h1V269.7h-1ZM1059 223.7h1V268.8h-1ZM1060 187.7h1V269.3h-1ZM1061 224.5h1V272.4h-1ZM1062 222.4h1V297.6h-1ZM1063 200.6h1V306.2h-1ZM1064 226.3h1V287.0h-1ZM1065 226.4h1V289.9h-1ZM1066 226.4h1V289.0h-1ZM1067 220.7h1V276.5h-1ZM1068 222.5h1V296.7h-1ZM1069 213.4h1V289.5h-1ZM1070 219.4h1V279.2h-1ZM1071 200.0h1V269.6h-1ZM1072 210.9h1V270.7h-1ZM1073 220.6h1V268.6h-1ZM1074 191.3h1V273.7h-1ZM1075 226.5h1V269.7h-1ZM1076 220.6h1V268.7h-1ZM1077 225.8h1V276.6h-1ZM1078 226.4h1V285.4h-1ZM1079 215.4h1V271.8h-1ZM1080 202.5h1V276.0h-1ZM1081 225.8h1V280.2h-1ZM1082 223.3h1V268.6h-1ZM1083 220.7h1V269.7h-1ZM1084 222.3h1V271.4h-1ZM1085 223.6h1V296.8h-1ZM1086 221.9h1V274.8h-1ZM1087 224.3h1V293.0h-1ZM1088 215.5h1V279.3h-1ZM1089 191.6h1V275.4h-1ZM1090 215.8h1V271.6h-1ZM1091 216.2h1V281.8h-1ZM1092 221.4h1V272.4h-1ZM1093 224.1h1V269.3h-1ZM1094 220.6h1V272.6h-1ZM1095 219.4h1V268.6h-1ZM1096 222.8h1V284.7h-1ZM1097 224.8h1V269.8h-1ZM1098 225.8h1V268.7h-1ZM1099 225.0h1V299.5h-1ZM1100 210.1h1V269.1h-1ZM1101 209.7h1V275.9h-1ZM1102 216.6h1V289.7h-1ZM1103 225.9h1V270.6h-1ZM1104 215.3h1V271.7h-1ZM1105 219.6h1V268.7h-1ZM1106 208.8h1V271.9h-1ZM1107 214.8h1V277.6h-1ZM1108 209.9h1V268.6h-1ZM1109 219.7h1V271.3h-1ZM1110 208.1h1V274.4h-1ZM1111 209.5h1V288.8h-1ZM1112 216.3h1V274.1h-1ZM1113 218.4h1V274.2h-1ZM1114 213.2h1V283.9h-1ZM1115 226.1h1V268.6h-1ZM1116 221.5h1V268.6h-1ZM1117 218.5h1V272.0h-1ZM1118 221.5h1V272.0h-1ZM1119 224.4h1V290.7h-1ZM1120 226.2h1V280.3h-1ZM1121 212.1h1V270.5h-1ZM1122 216.6h1V287.4h-1ZM1123 225.9h1V268.6h-1ZM1124 215.5h1V268.6h-1ZM1125 223.3h1V270.9h-1ZM1126 224.6h1V268.5h-1ZM1127 198.5h1V270.3h-1ZM1128 224.5h1V290.0h-1ZM1129 224.8h1V268.6h-1ZM1130 205.2h1V280.2h-1ZM1131 221.7h1V278.5h-1ZM1132 195.1h1V302.4h-1ZM1133 220.2h1V275.7h-1ZM1134 223.3h1V268.5h-1ZM1135 211.3h1V269.9h-1ZM1136 214.3h1V269.6h-1ZM1137 226.4h1V277.6h-1ZM1138 215.4h1V279.2h-1ZM1139 202.8h1V269.6h-1ZM1140 207.9h1V281.0h-1ZM1141 218.3h1V280.9h-1ZM1142 211.1h1V271.4h-1ZM1143 209.1h1V284.8h-1ZM1144 225.5h1V304.4h-1ZM1145 221.8h1V271.3h-1ZM1146 219.2h1V279.8h-1ZM1147 220.2h1V271.9h-1ZM1148 226.4h1V286.4h-1ZM1149 224.0h1V269.6h-1ZM1150 226.2h1V305.0h-1ZM1151 219.9h1V270.7h-1ZM1152 226.2h1V271.6h-1ZM1153 207.3h1V269.1h-1ZM1154 211.8h1V268.8h-1ZM1155 226.5h1V275.6h-1ZM1156 225.5h1V273.5h-1ZM1157 233.8h1V265.2h-1ZM1158 240.2h1V258.8h-1ZM1159 244.8h1V254.2h-1ZM1160 247.6h1V251.4h-1ZM1161 248.5h1V250.5h-1ZM1162 248.5h1V250.5h-1ZM1163 248.5h1V250.5h-1ZM1164 248.5h1V250.5h-1ZM1165 248.5h1V250.5h-1ZM1166 248.5h1V250.5h-1ZM1167 248.5h1V250.5h-1ZM1168 248.5h1V250.5h-1ZM1169 248.5h1V250.5h-1ZM1170 248.5h1V250.5h-1ZM1171 248.5h1V250.5h-1ZM1172 248.5h1V250.5h-1ZM1173 248.5h1V250.5h-1ZM1174 248.5h1V250.5h-1ZM1175 248.5h1V250.5h-1ZM1176 248.5h1V250.5h-1ZM1177 248.5h1V250.5h-1ZM1178 248.5h1V250.5h-1ZM1179 248.5h1V250.5h-1ZM1180 248.5h1V250.5h-1ZM1181 248.5h1V250.5h-1ZM1182 248.5h1V250.5h-1ZM1183 248.5h1V250.5h-1ZM1184 248.5h1V250.5h-1ZM1185 248.5h1V250.5h-1ZM1186 248.5h1V250.5h-1ZM1187 248.5h1V250.5h-1ZM1188 248.5h1V250.5h-1ZM1189 248.5h1V250.5h-1ZM1190 248.5h1V250.5h-1ZM1191 248.5h1V250.5h-1Z" fill="#2e3f70"/><rect x="340" y="135" width="853" height="1" fill="rgba(110,110,120,0.5)"/></svg>
<div class="t" style="left:342px;top:122.03px;font-size:10px;color:rgba(150,150,150,0.22);font-weight:bold;">+0.0 dB</div>
<svg width="1209" height="609"><rect x="349.21" y="319" width="1" height="18" fill="#484848"/><rect x="359.87" y="319" width="1" height="18" fill="#484848"/><rect x="370.52" y="319" width="1" height="18" fill="#484848"/><rect x="381.18" y="319" width="1" height="18" fill="#484848"/><rect x="391.83" y="319" width="1" height="18" fill="#484848"/><rect x="402.49" y="319" width="1" height="18" fill="#484848"/><rect x="413.14" y="319" width="1" height="18" fill="#484848"/><rect x="423.80" y="319" width="1" height="18" fill="#484848"/><rect x="434.45" y="319" width="1" height="18" fill="#484848"/><rect x="445.11" y="319" width="1" height="18" fill="#484848"/><rect x="455.76" y="319" width="1" height="18" fill="#484848"/><rect x="466.42" y="319" width="1" height="18" fill="#484848"/><rect x="477.07" y="319" width="1" height="18" fill="#484848"/><rect x="487.73" y="319" width="1" height="18" fill="#484848"/><rect x="498.38" y="319" width="1" height="18" fill="#484848"/><rect x="509.04" y="319" width="1" height="18" fill="#484848"/><rect x="519.69" y="319" width="1" height="18" fill="#484848"/><rect x="530.35" y="319" width="1" height="18" fill="#484848"/><rect x="541.00" y="319" width="1" height="18" fill="#484848"/><rect x="551.66" y="319" width="1" height="18" fill="#484848"/><rect x="562.31" y="319" width="1" height="18" fill="#484848"/><rect x="572.97" y="319" width="1" height="18" fill="#484848"/><rect x="583.62" y="319" width="1" height="18" fill="#484848"/><rect x="594.28" y="319" width="1" height="18" fill="#484848"/><rect x="604.93" y="319" width="1" height="18" fill="#484848"/><rect x="615.59" y="319" width="1" height="18" fill="#484848"/><rect x="626.24" y="319" width="1" height="18" fill="#484848"/><rect x="636.90" y="319" width="1" height="18" fill="#484848"/><rect x="647.55" y="319" width="1" height="18" fill="#484848"/><rect x="658.21" y="319" width="1" height="18" fill="#484848"/><rect x="668.86" y="319" width="1" height="18" fill="#484848"/><rect x="679.52" y="319" width="1" height="18" fill="#484848"/><rect x="690.17" y="319" width="1" height="18" fill="#484848"/><rect x="700.83" y="319" width="1" height="18" fill="#484848"/><rect x="711.48" y="319" width="1" height="18" fill="#484848"/><rect x="722.14" y="319" width="1" height="18" fill="#484848"/><rect x="732.79" y="319" width="1" height="18" fill="#484848"/><rect x="743.45" y="319" width="1" height="18" fill="#484848"/><rect x="754.10" y="319" width="1" height="18" fill="#484848"/><rect x="764.76" y="319" width="1" height="18" fill="#484848"/><rect x="775.41" y="319" width="1" height="18" fill="#484848"/><rect x="786.07" y="319" width="1" height="18" fill="#484848"/><rect x="796.72" y="319" width="1" height="18" fill="#484848"/><rect x="807.38" y="319" width="1" height="18" fill="#484848"/><rect x="818.03" y="319" width="1" height="18" fill="#484848"/><rect x="828.69" y="319" width="1" height="18" fill="#484848"/><rect x="839.34" y="319" width="1" height="18" fill="#484848"/><rect x="850.00" y="319" width="1" height="18" fill="#484848"/><rect x="860.65" y="319" width="1" height="18" fill="#484848"/><rect x="871.31" y="319" width="1" height="18" fill="#484848"/><rect x="881.96" y="319" width="1" height="18" fill="#484848"/><rect x="892.62" y="319" width="1" height="18" fill="#484848"/><rect x="903.27" y="319" width="1" height="18" fill="#484848"/><rect x="913.93" y="319" width="1" height="18" fill="#484848"/><rect x="924.58" y="319" width="1" height="18" fill="#484848"/><rect x="935.24" y="319" width="1" height="18" fill="#484848"/><rect x="945.89" y="319" width="1" height="18" fill="#484848"/><rect x="956.55" y="319" width="1" height="18" fill="#484848"/><rect x="967.20" y="319" width="1" height="18" fill="#484848"/><rect x="977.86" y="319" width="1" height="18" fill="#484848"/><rect x="988.51" y="319" width="1" height="18" fill="#484848"/><rect x="999.17" y="319" width="1" height="18" fill="#484848"/><rect x="1009.82" y="319" width="1" height="18" fill="#484848"/><rect x="1020.48" y="319" width="1" height="18" fill="#484848"/><rect x="1031.13" y="319" width="1" height="18" fill="#484848"/><rect x="1041.79" y="319" width="1" height="18" fill="#484848"/><rect x="1052.44" y="319" width="1" height="18" fill="#484848"/><rect x="1063.10" y="319" width="1" height="18" fill="#484848"/><rect x="1073.75" y="319" width="1" height="18" fill="#484848"/><rect x="1084.41" y="319" width="1" height="18" fill="#484848"/><rect x="1095.06" y="319" width="1" height="18" fill="#484848"/><rect x="1105.72" y="319" width="1" height="18" fill="#484848"/><rect x="1116.37" y="319" width="1" height="18" fill="#484848"/><rect x="1127.03" y="319" width="1" height="18" fill="#484848"/><rect x="1137.68" y="319" width="1" height="18" fill="#484848"/><rect x="1148.34" y="319" width="1" height="18" fill="#484848"/><rect x="1158.99" y="319" width="1" height="18" fill="#484848"/><rect x="1169.65" y="319" width="1" height="18" fill="#484848"/><rect x="1180.30" y="319" width="1" height="18" fill="#484848"/><rect x="1190.96" y="319" width="1" height="18" fill="#484848"/><rect x="1201.61" y="319" width="1" height="18" fill="#484848"/></svg>
<svg width="1209" height="609"><path d="M344 341.5H1209" stroke="#3a3a3a" stroke-width="1" stroke-dasharray="5 3 2 3"/></svg>
<svg width="1209" height="609"><polygon points="348,597 349,417 950.2,417 960.4,417.7 964.3,414.3 1156.4,413.8 1166.4,417 1189.4,428.9 1194,597 1194,598 348,598" fill="#3b3829"/><polyline points="349,417 950.2,417 960.4,417.7 964.3,414.3 1156.4,413.8 1166.4,417 1189.4,428.9 1194,597 1209,597" fill="none" stroke="#f0e47c" stroke-width="1.6"/><path d="M348.5 417V597" stroke="#f0e47c" stroke-width="2"/><circle cx="349" cy="417" r="2.9" fill="#f2e68a" stroke="#1f1d10" stroke-width="0.6"/><circle cx="348.5" cy="597" r="2.9" fill="#f2e68a" stroke="#1f1d10" stroke-width="0.6"/><circle cx="950.2" cy="417" r="2.9" fill="#f2e68a" stroke="#1f1d10" stroke-width="0.6"/><circle cx="960.4" cy="417.7" r="2.9" fill="#f2e68a" stroke="#1f1d10" stroke-width="0.6"/><circle cx="964.3" cy="414.3" r="2.9" fill="#f2e68a" stroke="#1f1d10" stroke-width="0.6"/><circle cx="1156.4" cy="413.8" r="2.9" fill="#f2e68a" stroke="#1f1d10" stroke-width="0.6"/><circle cx="1166.4" cy="417" r="2.9" fill="#f2e68a" stroke="#1f1d10" stroke-width="0.6"/><circle cx="1189.4" cy="428.9" r="2.9" fill="#f2e68a" stroke="#1f1d10" stroke-width="0.6"/><circle cx="1194" cy="597" r="2.9" fill="#f2e68a" stroke="#1f1d10" stroke-width="0.6"/><circle cx="339.5" cy="597" r="2.6" fill="none" stroke="#f2e68a" stroke-width="1"/></svg>
<div class="t" style="left:352.3px;top:404.31px;font-size:10.5px;color:#f2e68a;font-weight:bold;letter-spacing:0.2px">+0.0 dB</div>
<div class="t" style="left:966.6px;top:401.61px;font-size:10.5px;color:#f2e68a;font-weight:bold;letter-spacing:0.7px">+0.3</div>
<div class="t" style="left:952.8px;top:422.61px;font-size:10.5px;color:#f2e68a;font-weight:bold;letter-spacing:0.2px">+0.0 dB</div>
<div class="t" style="left:1192px;top:416.71px;font-size:10.5px;color:#f2e68a;font-weight:bold;letter-spacing:0.5px">-1.2</div>
<div class="t" style="left:1196px;top:585.53px;font-size:10px;color:#f2e68a;font-weight:bold;">-∞</div>
<div class="a" style="left:339px;top:20px;width:1px;height:589px;background:#f4eed0;"></div>
<svg width="360" height="40"><path d="M333.3 22.3Q333.3 20 335.6 20H343.8Q346.1 20 346.1 22.3V25.3L339.6 32L333.3 25.3Z" fill="#efe39a" stroke="#1a1808" stroke-width="0.9"/><rect x="339.2" y="21" width="0.9" height="11" fill="#f5ec60"/></svg>
</body></html>
